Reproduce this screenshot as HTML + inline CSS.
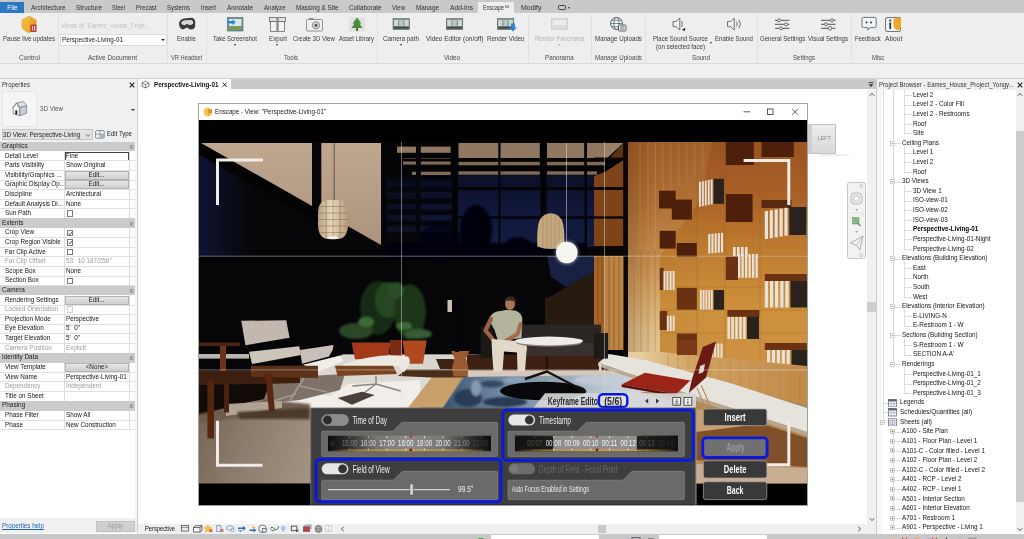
<!DOCTYPE html>
<html lang="en"><head><meta charset="utf-8"><title>Enscape - Perspective-Living-01</title>
<style>
html,body{margin:0;padding:0;background:#fff;}
body{width:1024px;height:539px;overflow:hidden;font-family:"Liberation Sans",sans-serif;}
#root{position:relative;width:1024px;height:539px;overflow:hidden;will-change:transform;filter:blur(0.35px);}
.b{position:absolute;display:block;}
.t{position:absolute;white-space:pre;display:block;}
svg{overflow:hidden;}
svg text{font-family:"Liberation Sans",sans-serif;}
</style></head>
<body><div id="root">
<div class="b" style="left:0.00px;top:0.00px;width:1024.00px;height:13.00px;background:#c9c9c9;"></div>
<div class="b" style="left:0.00px;top:2.00px;width:24.00px;height:11.00px;background:#2b79c2;"></div>
<span class="t" style="top:3.78px;font-size:6.8px;line-height:8.84px;color:#fff;left:6.52px;transform:scaleX(0.9450);transform-origin:50% 50%;">File</span>
<span class="t" style="top:3.78px;font-size:6.8px;line-height:8.84px;color:#2e2e2e;left:30.50px;transform:scaleX(0.9509);transform-origin:0 50%;">Architecture</span>
<span class="t" style="top:3.78px;font-size:6.8px;line-height:8.84px;color:#2e2e2e;left:75.50px;transform:scaleX(0.9424);transform-origin:0 50%;">Structure</span>
<span class="t" style="top:3.78px;font-size:6.8px;line-height:8.84px;color:#2e2e2e;left:112.00px;transform:scaleX(0.8387);transform-origin:0 50%;">Steel</span>
<span class="t" style="top:3.78px;font-size:6.8px;line-height:8.84px;color:#2e2e2e;left:136.00px;transform:scaleX(0.8892);transform-origin:0 50%;">Precast</span>
<span class="t" style="top:3.78px;font-size:6.8px;line-height:8.84px;color:#2e2e2e;left:167.00px;transform:scaleX(0.8822);transform-origin:0 50%;">Systems</span>
<span class="t" style="top:3.78px;font-size:6.8px;line-height:8.84px;color:#2e2e2e;left:201.00px;transform:scaleX(0.8820);transform-origin:0 50%;">Insert</span>
<span class="t" style="top:3.78px;font-size:6.8px;line-height:8.84px;color:#2e2e2e;left:227.00px;transform:scaleX(0.9550);transform-origin:0 50%;">Annotate</span>
<span class="t" style="top:3.78px;font-size:6.8px;line-height:8.84px;color:#2e2e2e;left:263.50px;transform:scaleX(0.8887);transform-origin:0 50%;">Analyze</span>
<span class="t" style="top:3.78px;font-size:6.8px;line-height:8.84px;color:#2e2e2e;left:296.00px;transform:scaleX(0.9371);transform-origin:0 50%;">Massing &amp; Site</span>
<span class="t" style="top:3.78px;font-size:6.8px;line-height:8.84px;color:#2e2e2e;left:349.00px;transform:scaleX(0.9345);transform-origin:0 50%;">Collaborate</span>
<span class="t" style="top:3.78px;font-size:6.8px;line-height:8.84px;color:#2e2e2e;left:392.00px;transform:scaleX(0.8894);transform-origin:0 50%;">View</span>
<span class="t" style="top:3.78px;font-size:6.8px;line-height:8.84px;color:#2e2e2e;left:416.00px;transform:scaleX(0.9359);transform-origin:0 50%;">Manage</span>
<span class="t" style="top:3.78px;font-size:6.8px;line-height:8.84px;color:#2e2e2e;left:449.50px;transform:scaleX(0.9814);transform-origin:0 50%;">Add-Ins</span>
<div class="b" style="left:478.00px;top:2.00px;width:36.00px;height:11.50px;background:#eeeeee;"></div>
<span class="t" style="top:3.78px;font-size:6.8px;line-height:8.84px;color:#2e2e2e;left:482.50px;transform:scaleX(0.7967);transform-origin:0 50%;">Enscape™</span>
<span class="t" style="top:3.78px;font-size:6.8px;line-height:8.84px;color:#2e2e2e;left:521.00px;transform:scaleX(1.0235);transform-origin:0 50%;">Modify</span>
<div class="b" style="left:558.00px;top:5.20px;width:7.50px;height:5.00px;border:0.8px solid #444;border-radius:1.2px;box-sizing:border-box;"></div>
<div class="b" style="left:567.5px;top:7px;border-left:1.6px solid transparent;border-right:1.6px solid transparent;border-top:2px solid #333;"></div>
<div class="b" style="left:0.00px;top:13.00px;width:1024.00px;height:50.30px;background:#eeeeee;"></div>
<div class="b" style="left:0.00px;top:63.20px;width:1024.00px;height:0.80px;background:#dadada;"></div>
<div class="b" style="left:0.00px;top:64.00px;width:1024.00px;height:14.20px;background:#f0f0f0;"></div>
<div class="b" style="left:57.50px;top:14.00px;width:0.80px;height:49.00px;background:#e0e0e0;"></div>
<div class="b" style="left:167.00px;top:14.00px;width:0.80px;height:49.00px;background:#e0e0e0;"></div>
<div class="b" style="left:205.50px;top:14.00px;width:0.80px;height:49.00px;background:#e0e0e0;"></div>
<div class="b" style="left:377.00px;top:14.00px;width:0.80px;height:49.00px;background:#e0e0e0;"></div>
<div class="b" style="left:527.50px;top:14.00px;width:0.80px;height:49.00px;background:#e0e0e0;"></div>
<div class="b" style="left:591.00px;top:14.00px;width:0.80px;height:49.00px;background:#e0e0e0;"></div>
<div class="b" style="left:645.00px;top:14.00px;width:0.80px;height:49.00px;background:#e0e0e0;"></div>
<div class="b" style="left:756.50px;top:14.00px;width:0.80px;height:49.00px;background:#e0e0e0;"></div>
<div class="b" style="left:851.00px;top:14.00px;width:0.80px;height:49.00px;background:#e0e0e0;"></div>
<span class="t" style="top:34.58px;font-size:6.8px;line-height:8.84px;color:#3a3a3a;left:3.00px;transform:scaleX(0.9049);transform-origin:0 50%;">Pause live updates</span>
<span class="t" style="top:34.58px;font-size:6.8px;line-height:8.84px;color:#3a3a3a;left:177.00px;transform:scaleX(0.8973);transform-origin:0 50%;">Enable</span>
<span class="t" style="top:34.58px;font-size:6.8px;line-height:8.84px;color:#3a3a3a;left:213.00px;transform:scaleX(0.8687);transform-origin:0 50%;">Take Screenshot</span>
<span class="t" style="top:34.58px;font-size:6.8px;line-height:8.84px;color:#3a3a3a;left:268.50px;transform:scaleX(0.9159);transform-origin:0 50%;">Export</span>
<span class="t" style="top:34.58px;font-size:6.8px;line-height:8.84px;color:#3a3a3a;left:293.00px;transform:scaleX(0.8790);transform-origin:0 50%;">Create 3D View</span>
<span class="t" style="top:34.58px;font-size:6.8px;line-height:8.84px;color:#3a3a3a;left:338.50px;transform:scaleX(0.8820);transform-origin:0 50%;">Asset Library</span>
<span class="t" style="top:34.58px;font-size:6.8px;line-height:8.84px;color:#3a3a3a;left:383.00px;transform:scaleX(0.9158);transform-origin:0 50%;">Camera path</span>
<span class="t" style="top:34.58px;font-size:6.8px;line-height:8.84px;color:#3a3a3a;left:426.00px;transform:scaleX(0.9546);transform-origin:0 50%;">Video Editor (on/off)</span>
<span class="t" style="top:34.58px;font-size:6.8px;line-height:8.84px;color:#3a3a3a;left:486.50px;transform:scaleX(0.9044);transform-origin:0 50%;">Render Video</span>
<span class="t" style="top:34.58px;font-size:6.8px;line-height:8.84px;color:#3a3a3a;left:595.00px;transform:scaleX(0.9142);transform-origin:0 50%;">Manage Uploads</span>
<span class="t" style="top:34.58px;font-size:6.8px;line-height:8.84px;color:#3a3a3a;left:652.50px;transform:scaleX(0.8871);transform-origin:0 50%;">Place Sound Source</span>
<span class="t" style="top:42.58px;font-size:6.8px;line-height:8.84px;color:#3a3a3a;left:656.00px;transform:scaleX(0.9065);transform-origin:0 50%;">(on selected face)</span>
<span class="t" style="top:34.58px;font-size:6.8px;line-height:8.84px;color:#3a3a3a;left:715.00px;transform:scaleX(0.8894);transform-origin:0 50%;">Enable Sound</span>
<span class="t" style="top:34.58px;font-size:6.8px;line-height:8.84px;color:#3a3a3a;left:759.50px;transform:scaleX(0.8933);transform-origin:0 50%;">General Settings</span>
<span class="t" style="top:34.58px;font-size:6.8px;line-height:8.84px;color:#3a3a3a;left:808.00px;transform:scaleX(0.8917);transform-origin:0 50%;">Visual Settings</span>
<span class="t" style="top:34.58px;font-size:6.8px;line-height:8.84px;color:#3a3a3a;left:854.75px;transform:scaleX(0.8623);transform-origin:0 50%;">Feedback</span>
<span class="t" style="top:34.58px;font-size:6.8px;line-height:8.84px;color:#3a3a3a;left:884.50px;transform:scaleX(0.9707);transform-origin:0 50%;">About</span>
<span class="t" style="top:34.58px;font-size:6.8px;line-height:8.84px;color:#b4b4b4;left:534.50px;transform:scaleX(0.8908);transform-origin:0 50%;">Render Panorama</span>
<span class="t" style="top:53.58px;font-size:6.8px;line-height:8.84px;color:#4a4a4a;left:19.00px;transform:scaleX(0.9580);transform-origin:0 50%;">Control</span>
<span class="t" style="top:53.58px;font-size:6.8px;line-height:8.84px;color:#4a4a4a;left:88.00px;transform:scaleX(0.9533);transform-origin:0 50%;">Active Document</span>
<span class="t" style="top:53.58px;font-size:6.8px;line-height:8.84px;color:#4a4a4a;left:171.00px;transform:scaleX(0.8455);transform-origin:0 50%;">VR Headset</span>
<span class="t" style="top:53.58px;font-size:6.8px;line-height:8.84px;color:#4a4a4a;left:284.00px;transform:scaleX(0.8819);transform-origin:0 50%;">Tools</span>
<span class="t" style="top:53.58px;font-size:6.8px;line-height:8.84px;color:#4a4a4a;left:444.00px;transform:scaleX(0.9265);transform-origin:0 50%;">Video</span>
<span class="t" style="top:53.58px;font-size:6.8px;line-height:8.84px;color:#4a4a4a;left:545.00px;transform:scaleX(0.9163);transform-origin:0 50%;">Panorama</span>
<span class="t" style="top:53.58px;font-size:6.8px;line-height:8.84px;color:#4a4a4a;left:595.00px;transform:scaleX(0.9142);transform-origin:0 50%;">Manage Uploads</span>
<span class="t" style="top:53.58px;font-size:6.8px;line-height:8.84px;color:#4a4a4a;left:692.00px;transform:scaleX(0.9154);transform-origin:0 50%;">Sound</span>
<span class="t" style="top:53.58px;font-size:6.8px;line-height:8.84px;color:#4a4a4a;left:793.00px;transform:scaleX(0.8954);transform-origin:0 50%;">Settings</span>
<span class="t" style="top:53.58px;font-size:6.8px;line-height:8.84px;color:#4a4a4a;left:871.75px;transform:scaleX(0.8765);transform-origin:0 50%;">Misc</span>
<span class="t" style="top:21.58px;font-size:6.8px;line-height:8.84px;color:#c2c2c2;left:61.00px;transform:scaleX(0.8917);transform-origin:0 50%;">Views of "Eames_House_Proje...</span>
<div class="b" style="left:60.00px;top:34.00px;width:106.50px;height:11.50px;background:#ffffff;border:0.6px solid #dcdcdc;box-sizing:border-box;"></div>
<span class="t" style="top:36.28px;font-size:6.8px;line-height:8.84px;color:#222;left:62.00px;transform:scaleX(0.9329);transform-origin:0 50%;">Perspective-Living-01</span>
<div class="b" style="left:161px;top:39px;border-left:2px solid transparent;border-right:2px solid transparent;border-top:2.2px solid #222;"></div>
<div class="b" style="left:233.5px;top:44.2px;border-left:1.8px solid transparent;border-right:1.8px solid transparent;border-top:2.2px solid #333;"></div>
<div class="b" style="left:276.0px;top:44.2px;border-left:1.8px solid transparent;border-right:1.8px solid transparent;border-top:2.2px solid #333;"></div>
<div class="b" style="left:399.5px;top:44.2px;border-left:1.8px solid transparent;border-right:1.8px solid transparent;border-top:2.2px solid #333;"></div>
<div class="b" style="left:557.5px;top:44.2px;border-left:1.8px solid transparent;border-right:1.8px solid transparent;border-top:2.2px solid #aaa;"></div>
<div class="b" style="left:709.5px;top:42.2px;border-left:1.8px solid transparent;border-right:1.8px solid transparent;border-top:2.2px solid #333;"></div>
<svg class="b" style="left:0;top:0" width="1024" height="70" viewBox="0 0 1024 70">
<defs>
<linearGradient id="gsh" x1="0" y1="0" x2="1" y2="1"><stop offset="0" stop-color="#f7c64a"/><stop offset="1" stop-color="#d98a12"/></linearGradient>
<linearGradient id="gfilm" x1="0" y1="0" x2="0" y2="1"><stop offset="0" stop-color="#8c9a9a"/><stop offset="1" stop-color="#6a7674"/></linearGradient>
<g id="film"><rect x="0" y="0" width="16.5" height="11" fill="url(#gfilm)" stroke="#4a5250" stroke-width="0.5"/>
<rect x="1" y="1.5" width="4.2" height="6" fill="#cfd8d2"/><rect x="6.2" y="1.5" width="4.2" height="6" fill="#b9c9c0"/><rect x="11.4" y="1.5" width="4.2" height="6" fill="#cfd8d2"/>
<rect x="1" y="8.5" width="14.5" height="1.5" fill="#3d4543"/></g>
</defs>
<!-- pause live updates shield -->
<path d="M22 20 L29 16.3 L36 20 L36 26 Q36 30 29 32.5 Q22 30 22 26 Z" fill="url(#gsh)" stroke="#c98a1a" stroke-width="0.6"/>
<path d="M22 20 L29 16.3 L29 32.5 Q22 30 22 26 Z" fill="#f2b63a" opacity="0.7"/>
<rect x="30.5" y="24.5" width="6" height="7.5" rx="0.8" fill="#c03a3a"/>
<rect x="32" y="26" width="1.1" height="4.5" fill="#f4c8c8"/><rect x="34" y="26" width="1.1" height="4.5" fill="#f4c8c8"/>
<!-- VR headset -->
<path d="M179 24 Q179 19.5 184 18.5 L192 17.8 Q195 18.5 195.3 22 L195 27 Q194 29.8 190 29.5 L187 27.5 L183 29.5 Q179.5 29 179 24 Z" fill="#3a3a3a"/>
<path d="M181 23 Q182 20.5 185 20.3 L191.5 20 Q193.5 20.8 193.3 23.5 Q192 25 189 25 L187 23.8 L184.5 25.2 Q181.5 25 181 23 Z" fill="#d8d8d8"/>
<!-- take screenshot -->
<rect x="227.5" y="17.5" width="15.5" height="13.5" fill="#6f8f96" stroke="#56666a" stroke-width="0.6"/>
<rect x="229" y="19" width="12.5" height="7" fill="#d9e6ea"/>
<rect x="229" y="26" width="12.5" height="4" fill="#7a9a58"/>
<path d="M227 21 h5.5 v-1.8 l3.3 3 l-3.3 3 v-1.8 h-5.5 z" fill="#2f86d6"/>
<!-- export -->
<rect x="269.5" y="17.5" width="16" height="4" fill="#e4e4e4" stroke="#555" stroke-width="0.7"/>
<rect x="270.5" y="21.5" width="14" height="10" fill="#f4f4f4" stroke="#555" stroke-width="0.7"/>
<rect x="276.3" y="17.5" width="2.4" height="14" fill="#8a8f90"/>
<!-- create 3d view: camera -->
<rect x="306.5" y="19.5" width="16" height="11.5" rx="1.2" fill="#f0f0f0" stroke="#6a6a6a" stroke-width="0.7"/>
<rect x="309" y="18" width="4.5" height="2" fill="#8a8a8a"/>
<circle cx="316" cy="25.3" r="3.6" fill="#d8d8d8" stroke="#666" stroke-width="0.7"/><circle cx="316" cy="25.3" r="1.5" fill="#555"/>
<!-- asset library -->
<rect x="349" y="17" width="16.5" height="14.5" fill="#dfe3e0"/>
<path d="M357 17.5 l4.5 6 h-2 l3 4.5 h-11 l3 -4.5 h-2 z" fill="#4d8a3a"/>
<rect x="356.2" y="28" width="1.8" height="3" fill="#6b4a2a"/>
<!-- camera path / video editor / render video : film strips -->

<use href="#film" x="393" y="18.5"/>
<use href="#film" x="446.3" y="18.5"/>
<use href="#film" x="497.3" y="18.5"/>
<path d="M509 24 h4 v4 h2 l-4 4 l-4 -4 h2 z" fill="#2f86d6" transform="translate(2,-0.5)"/>
<!-- render panorama (disabled) -->
<rect x="551.5" y="18.5" width="16" height="11" fill="#dcdcdc" stroke="#c4c4c4" stroke-width="0.6"/>
<rect x="553" y="20" width="13" height="5" fill="#ececec"/>
<!-- manage uploads: globe -->
<circle cx="616.5" cy="23.5" r="6" fill="#f4f6f8" stroke="#4a5a66" stroke-width="0.9"/>
<ellipse cx="616.5" cy="23.5" rx="2.6" ry="6" fill="none" stroke="#4a5a66" stroke-width="0.7"/>
<path d="M610.5 23.5 h12 M611.5 20.3 h10 M611.5 26.7 h10" stroke="#4a5a66" stroke-width="0.7" fill="none"/>
<rect x="618.5" y="25" width="7.5" height="6" rx="0.8" fill="#e8ecf0" stroke="#3d4a55" stroke-width="0.8"/>
<path d="M620 27 h4.5 M620 29 h4.5" stroke="#3d4a55" stroke-width="0.7"/>
<!-- place sound source -->
<path d="M673 21.5 h3 l3.8 -3.3 v11.8 l-3.8 -3.3 h-3 z" fill="#f0f0f0" stroke="#555" stroke-width="0.8"/>
<path d="M681.5 21 q1.8 3 0 6" stroke="#555" stroke-width="0.8" fill="none"/>
<path d="M682 29.5 l3.5 -1.8 l-1 3.5 z" fill="#222"/>
<!-- enable sound -->
<path d="M727.5 21.5 h3 l3.8 -3.3 v11.8 l-3.8 -3.3 h-3 z" fill="#f0f0f0" stroke="#555" stroke-width="0.8"/>
<path d="M736.5 21.5 q1.6 2.5 0 5 M739 19.8 q2.6 4.2 0 8.4" stroke="#555" stroke-width="0.8" fill="none"/>
<!-- general settings -->
<g stroke="#4a5660" stroke-width="1" fill="none"><path d="M775 20.3 h14.5 M775 24.3 h14.5 M775 28.3 h14.5"/></g>
<g fill="#eef2f4" stroke="#4a5660" stroke-width="0.8"><circle cx="779" cy="20.3" r="1.5"/><circle cx="786" cy="24.3" r="1.5"/><circle cx="781" cy="28.3" r="1.5"/></g>
<!-- visual settings -->
<g stroke="#4a5660" stroke-width="1" fill="none"><path d="M821 20.3 h14.5 M821 24.3 h14.5 M821 28.3 h14.5"/></g>
<g fill="#eef2f4" stroke="#4a5660" stroke-width="0.8"><circle cx="832" cy="20.3" r="1.5"/><circle cx="826" cy="24.3" r="1.5"/><circle cx="830" cy="28.3" r="1.8"/></g>
<!-- feedback -->
<path d="M862 19 q0 -1.6 1.6 -1.6 h11 q1.6 0 1.6 1.6 v7 q0 1.6 -1.6 1.6 h-4.5 l-2.2 2.6 v-2.6 h-4.3 q-1.6 0 -1.6 -1.6 z" fill="#f2f4f6" stroke="#5a6a78" stroke-width="0.9"/>
<circle cx="866.5" cy="22.5" r="1" fill="#333"/><circle cx="871" cy="22.5" r="1" fill="#333"/>
<!-- about -->
<rect x="885.5" y="17.5" width="15" height="14" rx="1.5" fill="#f2f2f2" stroke="#5a6a78" stroke-width="0.9"/>
<path d="M893.5 19 l4 -1.8 l3.5 1.8 v8 q-1 2.5 -3.5 3.5 q-3 -1.5 -4 -4 z" fill="#f0a72a"/>
<rect x="889.3" y="22.5" width="1.8" height="6.5" fill="#2a3a5a"/><circle cx="890.2" cy="20.5" r="1.1" fill="#2a3a5a"/>
</svg>
<div class="b" style="left:0.00px;top:78.20px;width:138.00px;height:455.00px;background:#f0f0f0;"></div>
<div class="b" style="left:0.00px;top:78.20px;width:1024.00px;height:0.70px;background:#cfcfcf;"></div>
<div class="b" style="left:0.00px;top:79.00px;width:137.50px;height:10.50px;background:#f0f0f0;"></div>
<span class="t" style="top:81.24px;font-size:6.7px;line-height:8.71px;color:#333;left:2.00px;transform:scaleX(0.9169);transform-origin:0 50%;">Properties</span>
<svg class="b" style="left:128.5px;top:82px" width="6" height="6" viewBox="0 0 6 6"><path d="M0.7 0.7 L5.3 5.3 M5.3 0.7 L0.7 5.3" stroke="#222" stroke-width="1.1"/></svg>
<div class="b" style="left:0.00px;top:89.50px;width:137.50px;height:0.60px;background:#dcdcdc;"></div>
<div class="b" style="left:0.00px;top:90.00px;width:137.00px;height:38.00px;background:#f1f1f1;"></div>
<div class="b" style="left:2.00px;top:91.00px;width:35.00px;height:36.30px;background:#f5f5f5;border:0.6px solid #e4e4e4;box-sizing:border-box;"></div>
<svg class="b" style="left:11px;top:100px" width="18" height="18" viewBox="0 0 18 18">
<path d="M2.2 7.5 L5.5 3.2 L8.8 7.5 L8.8 15.8 L2.2 13.6 Z" fill="#f2f3f5" stroke="#6e747c" stroke-width="0.7" stroke-linejoin="round"/>
<path d="M8.8 7.5 L15.6 5.6 L15.6 13.2 L8.8 15.8 Z" fill="#c9ced6" stroke="#6e747c" stroke-width="0.7" stroke-linejoin="round"/>
<path d="M5.5 3.2 L12.2 1.6 L15.9 5.6 L8.8 7.5 Z" fill="#dde2ea" stroke="#6e747c" stroke-width="0.7" stroke-linejoin="round"/>
<path d="M1.4 8 L5.5 2.8 L9.2 7.8" fill="none" stroke="#6e747c" stroke-width="0.8"/>
<rect x="4.3" y="10.4" width="2" height="4" fill="#2a2a2a"/>
</svg>
<span class="t" style="top:105.14px;font-size:6.7px;line-height:8.71px;color:#555;left:40.00px;transform:scaleX(0.9264);transform-origin:0 50%;">3D View</span>
<div class="b" style="left:130.5px;top:108.5px;border-left:2.1px solid transparent;border-right:2.1px solid transparent;border-top:2.3px solid #333;"></div>
<div class="b" style="left:1.50px;top:128.60px;width:91.00px;height:11.80px;background:#e2e2e2;border:0.5px solid #c6c6c6;box-sizing:border-box;"></div>
<span class="t" style="top:131.15px;font-size:6.7px;line-height:8.71px;color:#222;left:3.00px;transform:scaleX(0.9280);transform-origin:0 50%;">3D View: Perspective-Living</span>
<svg class="b" style="left:84.5px;top:132.5px" width="6" height="5" viewBox="0 0 6 5"><path d="M1 1.2 L3 3.4 L5 1.2" stroke="#444" stroke-width="0.7" fill="none"/></svg>
<svg class="b" style="left:95px;top:129px" width="10" height="10" viewBox="0 0 10 10">
<rect x="0.6" y="1.6" width="8.6" height="7.6" rx="0.8" fill="#f4f6fa" stroke="#566" stroke-width="0.7"/>
<path d="M4.9 1.6 v7.6 M0.6 5.2 h8.6" stroke="#566" stroke-width="0.6"/><rect x="5.4" y="5.7" width="3.4" height="3" fill="#9ab0d8"/></svg>
<span class="t" style="top:129.95px;font-size:6.7px;line-height:8.71px;color:#222;left:107.00px;transform:scaleX(0.8989);transform-origin:0 50%;">Edit Type</span>
<div class="b" style="left:0.00px;top:141.60px;width:134.50px;height:288.21px;background:#ffffff;"></div>
<div class="b" style="left:0.00px;top:141.60px;width:134.50px;height:9.61px;background:#cbcbcb;"></div>
<span class="t" style="top:141.95px;font-size:6.7px;line-height:8.71px;color:#1a1a1a;left:2.00px;transform:scaleX(0.9600);transform-origin:0 50%;">Graphics</span>
<svg class="b" style="left:128.5px;top:143.90px" width="5" height="5.5" viewBox="0 0 5 5.5"><path d="M1.2 2.5 L2.5 1.2 L3.8 2.5 M1.2 4.6 L2.5 3.3 L3.8 4.6" stroke="#333" stroke-width="0.7" fill="none"/></svg>
<span class="t" style="top:151.56px;font-size:6.7px;line-height:8.71px;color:#141414;left:5.00px;transform:scaleX(0.9450);transform-origin:0 50%;">Detail Level</span>
<div class="b" style="left:65.00px;top:151.51px;width:64.00px;height:9.21px;background:#fff;border:0.9px solid #444;box-sizing:border-box;"></div>
<span class="t" style="top:151.56px;font-size:6.7px;line-height:8.71px;color:#141414;left:66.30px;transform:scaleX(0.9450);transform-origin:0 50%;">Fine</span>
<div class="b" style="left:0.00px;top:160.41px;width:134.50px;height:0.50px;background:#e0e0e0;"></div>
<span class="t" style="top:161.16px;font-size:6.7px;line-height:8.71px;color:#141414;left:5.00px;transform:scaleX(0.9450);transform-origin:0 50%;">Parts Visibility</span>
<span class="t" style="top:161.16px;font-size:6.7px;line-height:8.71px;color:#141414;left:66.30px;transform:scaleX(0.9450);transform-origin:0 50%;">Show Original</span>
<div class="b" style="left:0.00px;top:170.02px;width:134.50px;height:0.50px;background:#e0e0e0;"></div>
<span class="t" style="top:170.77px;font-size:6.7px;line-height:8.71px;color:#141414;left:5.00px;transform:scaleX(0.9450);transform-origin:0 50%;">Visibility/Graphics ...</span>
<div class="b" style="left:65.00px;top:170.82px;width:64.00px;height:8.81px;background:linear-gradient(#e6e6e6,#cfcfcf);border:0.5px solid #b4b4b4;box-sizing:border-box;"></div>
<span class="t" style="top:170.77px;font-size:6.7px;line-height:8.71px;color:#222;left:88.44px;transform:scaleX(0.9450);transform-origin:50% 50%;">Edit...</span>
<div class="b" style="left:0.00px;top:179.63px;width:134.50px;height:0.50px;background:#e0e0e0;"></div>
<span class="t" style="top:180.38px;font-size:6.7px;line-height:8.71px;color:#141414;left:5.00px;transform:scaleX(0.9450);transform-origin:0 50%;">Graphic Display Op...</span>
<div class="b" style="left:65.00px;top:180.43px;width:64.00px;height:8.81px;background:linear-gradient(#e6e6e6,#cfcfcf);border:0.5px solid #b4b4b4;box-sizing:border-box;"></div>
<span class="t" style="top:180.38px;font-size:6.7px;line-height:8.71px;color:#222;left:88.44px;transform:scaleX(0.9450);transform-origin:50% 50%;">Edit...</span>
<div class="b" style="left:0.00px;top:189.23px;width:134.50px;height:0.50px;background:#e0e0e0;"></div>
<span class="t" style="top:189.98px;font-size:6.7px;line-height:8.71px;color:#141414;left:5.00px;transform:scaleX(0.9450);transform-origin:0 50%;">Discipline</span>
<span class="t" style="top:189.98px;font-size:6.7px;line-height:8.71px;color:#141414;left:66.30px;transform:scaleX(0.9450);transform-origin:0 50%;">Architectural</span>
<div class="b" style="left:0.00px;top:198.84px;width:134.50px;height:0.50px;background:#e0e0e0;"></div>
<span class="t" style="top:199.59px;font-size:6.7px;line-height:8.71px;color:#141414;left:5.00px;transform:scaleX(0.9450);transform-origin:0 50%;">Default Analysis Di...</span>
<span class="t" style="top:199.59px;font-size:6.7px;line-height:8.71px;color:#141414;left:66.30px;transform:scaleX(0.9450);transform-origin:0 50%;">None</span>
<div class="b" style="left:0.00px;top:208.45px;width:134.50px;height:0.50px;background:#e0e0e0;"></div>
<span class="t" style="top:209.20px;font-size:6.7px;line-height:8.71px;color:#141414;left:5.00px;transform:scaleX(0.9450);transform-origin:0 50%;">Sun Path</span>
<div class="b" style="left:66.70px;top:210.35px;width:6.60px;height:6.60px;background:#fff;border:0.7px solid #7a7a7a;box-sizing:border-box;"></div>
<div class="b" style="left:0.00px;top:218.06px;width:134.50px;height:0.50px;background:#e0e0e0;"></div>
<div class="b" style="left:0.00px;top:218.46px;width:134.50px;height:9.61px;background:#cbcbcb;"></div>
<span class="t" style="top:218.80px;font-size:6.7px;line-height:8.71px;color:#1a1a1a;left:2.00px;transform:scaleX(0.9600);transform-origin:0 50%;">Extents</span>
<svg class="b" style="left:128.5px;top:220.76px" width="5" height="5.5" viewBox="0 0 5 5.5"><path d="M1.2 2.5 L2.5 1.2 L3.8 2.5 M1.2 4.6 L2.5 3.3 L3.8 4.6" stroke="#333" stroke-width="0.7" fill="none"/></svg>
<span class="t" style="top:228.41px;font-size:6.7px;line-height:8.71px;color:#141414;left:5.00px;transform:scaleX(0.9450);transform-origin:0 50%;">Crop View</span>
<div class="b" style="left:66.70px;top:229.56px;width:6.60px;height:6.60px;background:#fff;border:0.7px solid #7a7a7a;box-sizing:border-box;"></div>
<svg class="b" style="left:66.7px;top:229.56px" width="6.6" height="6.6" viewBox="0 0 6.6 6.6"><path d="M1.5 3.3 L2.9 4.8 L5.2 1.7" stroke="#333" stroke-width="0.8" fill="none"/></svg>
<div class="b" style="left:0.00px;top:237.27px;width:134.50px;height:0.50px;background:#e0e0e0;"></div>
<span class="t" style="top:238.02px;font-size:6.7px;line-height:8.71px;color:#141414;left:5.00px;transform:scaleX(0.9450);transform-origin:0 50%;">Crop Region Visible</span>
<div class="b" style="left:66.70px;top:239.17px;width:6.60px;height:6.60px;background:#fff;border:0.7px solid #7a7a7a;box-sizing:border-box;"></div>
<svg class="b" style="left:66.7px;top:239.17px" width="6.6" height="6.6" viewBox="0 0 6.6 6.6"><path d="M1.5 3.3 L2.9 4.8 L5.2 1.7" stroke="#333" stroke-width="0.8" fill="none"/></svg>
<div class="b" style="left:0.00px;top:246.88px;width:134.50px;height:0.50px;background:#e0e0e0;"></div>
<span class="t" style="top:247.63px;font-size:6.7px;line-height:8.71px;color:#141414;left:5.00px;transform:scaleX(0.9450);transform-origin:0 50%;">Far Clip Active</span>
<div class="b" style="left:66.70px;top:248.78px;width:6.60px;height:6.60px;background:#fff;border:0.7px solid #7a7a7a;box-sizing:border-box;"></div>
<div class="b" style="left:0.00px;top:256.48px;width:134.50px;height:0.50px;background:#e0e0e0;"></div>
<span class="t" style="top:257.23px;font-size:6.7px;line-height:8.71px;color:#9a9a9a;left:5.00px;transform:scaleX(0.9450);transform-origin:0 50%;">Far Clip Offset</span>
<span class="t" style="top:257.23px;font-size:6.7px;line-height:8.71px;color:#9a9a9a;left:66.30px;transform:scaleX(0.9450);transform-origin:0 50%;">53'  10 187/256"</span>
<div class="b" style="left:0.00px;top:266.09px;width:134.50px;height:0.50px;background:#e0e0e0;"></div>
<span class="t" style="top:266.84px;font-size:6.7px;line-height:8.71px;color:#141414;left:5.00px;transform:scaleX(0.9450);transform-origin:0 50%;">Scope Box</span>
<span class="t" style="top:266.84px;font-size:6.7px;line-height:8.71px;color:#141414;left:66.30px;transform:scaleX(0.9450);transform-origin:0 50%;">None</span>
<div class="b" style="left:0.00px;top:275.70px;width:134.50px;height:0.50px;background:#e0e0e0;"></div>
<span class="t" style="top:276.45px;font-size:6.7px;line-height:8.71px;color:#141414;left:5.00px;transform:scaleX(0.9450);transform-origin:0 50%;">Section Box</span>
<div class="b" style="left:66.70px;top:277.60px;width:6.60px;height:6.60px;background:#fff;border:0.7px solid #7a7a7a;box-sizing:border-box;"></div>
<div class="b" style="left:0.00px;top:285.30px;width:134.50px;height:0.50px;background:#e0e0e0;"></div>
<div class="b" style="left:0.00px;top:285.70px;width:134.50px;height:9.61px;background:#cbcbcb;"></div>
<span class="t" style="top:286.05px;font-size:6.7px;line-height:8.71px;color:#1a1a1a;left:2.00px;transform:scaleX(0.9600);transform-origin:0 50%;">Camera</span>
<svg class="b" style="left:128.5px;top:288.00px" width="5" height="5.5" viewBox="0 0 5 5.5"><path d="M1.2 2.5 L2.5 1.2 L3.8 2.5 M1.2 4.6 L2.5 3.3 L3.8 4.6" stroke="#333" stroke-width="0.7" fill="none"/></svg>
<span class="t" style="top:295.66px;font-size:6.7px;line-height:8.71px;color:#141414;left:5.00px;transform:scaleX(0.9450);transform-origin:0 50%;">Rendering Settings</span>
<div class="b" style="left:65.00px;top:295.71px;width:64.00px;height:8.81px;background:linear-gradient(#e6e6e6,#cfcfcf);border:0.5px solid #b4b4b4;box-sizing:border-box;"></div>
<span class="t" style="top:295.66px;font-size:6.7px;line-height:8.71px;color:#222;left:88.44px;transform:scaleX(0.9450);transform-origin:50% 50%;">Edit...</span>
<div class="b" style="left:0.00px;top:304.52px;width:134.50px;height:0.50px;background:#e0e0e0;"></div>
<span class="t" style="top:305.27px;font-size:6.7px;line-height:8.71px;color:#9a9a9a;left:5.00px;transform:scaleX(0.9450);transform-origin:0 50%;">Locked Orientation</span>
<div class="b" style="left:66.70px;top:306.42px;width:6.60px;height:6.60px;background:#fff;border:0.7px solid #d0d0d0;box-sizing:border-box;"></div>
<div class="b" style="left:0.00px;top:314.13px;width:134.50px;height:0.50px;background:#e0e0e0;"></div>
<span class="t" style="top:314.87px;font-size:6.7px;line-height:8.71px;color:#141414;left:5.00px;transform:scaleX(0.9450);transform-origin:0 50%;">Projection Mode</span>
<span class="t" style="top:314.87px;font-size:6.7px;line-height:8.71px;color:#141414;left:66.30px;transform:scaleX(0.9450);transform-origin:0 50%;">Perspective</span>
<div class="b" style="left:0.00px;top:323.73px;width:134.50px;height:0.50px;background:#e0e0e0;"></div>
<span class="t" style="top:324.48px;font-size:6.7px;line-height:8.71px;color:#141414;left:5.00px;transform:scaleX(0.9450);transform-origin:0 50%;">Eye Elevation</span>
<span class="t" style="top:324.48px;font-size:6.7px;line-height:8.71px;color:#141414;left:66.30px;transform:scaleX(0.9450);transform-origin:0 50%;">5'  0"</span>
<div class="b" style="left:0.00px;top:333.34px;width:134.50px;height:0.50px;background:#e0e0e0;"></div>
<span class="t" style="top:334.09px;font-size:6.7px;line-height:8.71px;color:#141414;left:5.00px;transform:scaleX(0.9450);transform-origin:0 50%;">Target Elevation</span>
<span class="t" style="top:334.09px;font-size:6.7px;line-height:8.71px;color:#141414;left:66.30px;transform:scaleX(0.9450);transform-origin:0 50%;">5'  0"</span>
<div class="b" style="left:0.00px;top:342.95px;width:134.50px;height:0.50px;background:#e0e0e0;"></div>
<span class="t" style="top:343.70px;font-size:6.7px;line-height:8.71px;color:#9a9a9a;left:5.00px;transform:scaleX(0.9450);transform-origin:0 50%;">Camera Position</span>
<span class="t" style="top:343.70px;font-size:6.7px;line-height:8.71px;color:#9a9a9a;left:66.30px;transform:scaleX(0.9450);transform-origin:0 50%;">Explicit</span>
<div class="b" style="left:0.00px;top:352.55px;width:134.50px;height:0.50px;background:#e0e0e0;"></div>
<div class="b" style="left:0.00px;top:352.95px;width:134.50px;height:9.61px;background:#cbcbcb;"></div>
<span class="t" style="top:353.30px;font-size:6.7px;line-height:8.71px;color:#1a1a1a;left:2.00px;transform:scaleX(0.9600);transform-origin:0 50%;">Identity Data</span>
<svg class="b" style="left:128.5px;top:355.25px" width="5" height="5.5" viewBox="0 0 5 5.5"><path d="M1.2 2.5 L2.5 1.2 L3.8 2.5 M1.2 4.6 L2.5 3.3 L3.8 4.6" stroke="#333" stroke-width="0.7" fill="none"/></svg>
<span class="t" style="top:362.91px;font-size:6.7px;line-height:8.71px;color:#141414;left:5.00px;transform:scaleX(0.9450);transform-origin:0 50%;">View Template</span>
<div class="b" style="left:65.00px;top:362.96px;width:64.00px;height:8.81px;background:linear-gradient(#e6e6e6,#cfcfcf);border:0.5px solid #b4b4b4;box-sizing:border-box;"></div>
<span class="t" style="top:362.91px;font-size:6.7px;line-height:8.71px;color:#222;left:85.08px;transform:scaleX(0.9450);transform-origin:50% 50%;">&lt;None&gt;</span>
<div class="b" style="left:0.00px;top:371.77px;width:134.50px;height:0.50px;background:#e0e0e0;"></div>
<span class="t" style="top:372.52px;font-size:6.7px;line-height:8.71px;color:#141414;left:5.00px;transform:scaleX(0.9450);transform-origin:0 50%;">View Name</span>
<span class="t" style="top:372.52px;font-size:6.7px;line-height:8.71px;color:#141414;left:66.30px;transform:scaleX(0.9450);transform-origin:0 50%;">Perspective-Living-01</span>
<div class="b" style="left:0.00px;top:381.37px;width:134.50px;height:0.50px;background:#e0e0e0;"></div>
<span class="t" style="top:382.12px;font-size:6.7px;line-height:8.71px;color:#9a9a9a;left:5.00px;transform:scaleX(0.9450);transform-origin:0 50%;">Dependency</span>
<span class="t" style="top:382.12px;font-size:6.7px;line-height:8.71px;color:#9a9a9a;left:66.30px;transform:scaleX(0.9450);transform-origin:0 50%;">Independent</span>
<div class="b" style="left:0.00px;top:390.98px;width:134.50px;height:0.50px;background:#e0e0e0;"></div>
<span class="t" style="top:391.73px;font-size:6.7px;line-height:8.71px;color:#141414;left:5.00px;transform:scaleX(0.9450);transform-origin:0 50%;">Title on Sheet</span>
<div class="b" style="left:0.00px;top:400.59px;width:134.50px;height:0.50px;background:#e0e0e0;"></div>
<div class="b" style="left:0.00px;top:400.99px;width:134.50px;height:9.61px;background:#cbcbcb;"></div>
<span class="t" style="top:401.34px;font-size:6.7px;line-height:8.71px;color:#1a1a1a;left:2.00px;transform:scaleX(0.9600);transform-origin:0 50%;">Phasing</span>
<svg class="b" style="left:128.5px;top:403.29px" width="5" height="5.5" viewBox="0 0 5 5.5"><path d="M1.2 2.5 L2.5 1.2 L3.8 2.5 M1.2 4.6 L2.5 3.3 L3.8 4.6" stroke="#333" stroke-width="0.7" fill="none"/></svg>
<span class="t" style="top:410.94px;font-size:6.7px;line-height:8.71px;color:#141414;left:5.00px;transform:scaleX(0.9450);transform-origin:0 50%;">Phase Filter</span>
<span class="t" style="top:410.94px;font-size:6.7px;line-height:8.71px;color:#141414;left:66.30px;transform:scaleX(0.9450);transform-origin:0 50%;">Show All</span>
<div class="b" style="left:0.00px;top:419.80px;width:134.50px;height:0.50px;background:#e0e0e0;"></div>
<span class="t" style="top:420.55px;font-size:6.7px;line-height:8.71px;color:#141414;left:5.00px;transform:scaleX(0.9450);transform-origin:0 50%;">Phase</span>
<span class="t" style="top:420.55px;font-size:6.7px;line-height:8.71px;color:#141414;left:66.30px;transform:scaleX(0.9450);transform-origin:0 50%;">New Construction</span>
<div class="b" style="left:0.00px;top:429.41px;width:134.50px;height:0.50px;background:#e0e0e0;"></div>
<div class="b" style="left:64.40px;top:151.21px;width:0.50px;height:9.61px;background:#dcdcdc;"></div>
<div class="b" style="left:129.20px;top:151.21px;width:0.50px;height:9.61px;background:#dcdcdc;"></div>
<div class="b" style="left:64.40px;top:160.81px;width:0.50px;height:9.61px;background:#dcdcdc;"></div>
<div class="b" style="left:129.20px;top:160.81px;width:0.50px;height:9.61px;background:#dcdcdc;"></div>
<div class="b" style="left:64.40px;top:170.42px;width:0.50px;height:9.61px;background:#dcdcdc;"></div>
<div class="b" style="left:129.20px;top:170.42px;width:0.50px;height:9.61px;background:#dcdcdc;"></div>
<div class="b" style="left:64.40px;top:180.03px;width:0.50px;height:9.61px;background:#dcdcdc;"></div>
<div class="b" style="left:129.20px;top:180.03px;width:0.50px;height:9.61px;background:#dcdcdc;"></div>
<div class="b" style="left:64.40px;top:189.63px;width:0.50px;height:9.61px;background:#dcdcdc;"></div>
<div class="b" style="left:129.20px;top:189.63px;width:0.50px;height:9.61px;background:#dcdcdc;"></div>
<div class="b" style="left:64.40px;top:199.24px;width:0.50px;height:9.61px;background:#dcdcdc;"></div>
<div class="b" style="left:129.20px;top:199.24px;width:0.50px;height:9.61px;background:#dcdcdc;"></div>
<div class="b" style="left:64.40px;top:208.85px;width:0.50px;height:9.61px;background:#dcdcdc;"></div>
<div class="b" style="left:129.20px;top:208.85px;width:0.50px;height:9.61px;background:#dcdcdc;"></div>
<div class="b" style="left:64.40px;top:228.06px;width:0.50px;height:9.61px;background:#dcdcdc;"></div>
<div class="b" style="left:129.20px;top:228.06px;width:0.50px;height:9.61px;background:#dcdcdc;"></div>
<div class="b" style="left:64.40px;top:237.67px;width:0.50px;height:9.61px;background:#dcdcdc;"></div>
<div class="b" style="left:129.20px;top:237.67px;width:0.50px;height:9.61px;background:#dcdcdc;"></div>
<div class="b" style="left:64.40px;top:247.28px;width:0.50px;height:9.61px;background:#dcdcdc;"></div>
<div class="b" style="left:129.20px;top:247.28px;width:0.50px;height:9.61px;background:#dcdcdc;"></div>
<div class="b" style="left:64.40px;top:256.88px;width:0.50px;height:9.61px;background:#dcdcdc;"></div>
<div class="b" style="left:129.20px;top:256.88px;width:0.50px;height:9.61px;background:#dcdcdc;"></div>
<div class="b" style="left:64.40px;top:266.49px;width:0.50px;height:9.61px;background:#dcdcdc;"></div>
<div class="b" style="left:129.20px;top:266.49px;width:0.50px;height:9.61px;background:#dcdcdc;"></div>
<div class="b" style="left:64.40px;top:276.10px;width:0.50px;height:9.61px;background:#dcdcdc;"></div>
<div class="b" style="left:129.20px;top:276.10px;width:0.50px;height:9.61px;background:#dcdcdc;"></div>
<div class="b" style="left:64.40px;top:295.31px;width:0.50px;height:9.61px;background:#dcdcdc;"></div>
<div class="b" style="left:129.20px;top:295.31px;width:0.50px;height:9.61px;background:#dcdcdc;"></div>
<div class="b" style="left:64.40px;top:304.92px;width:0.50px;height:9.61px;background:#dcdcdc;"></div>
<div class="b" style="left:129.20px;top:304.92px;width:0.50px;height:9.61px;background:#dcdcdc;"></div>
<div class="b" style="left:64.40px;top:314.53px;width:0.50px;height:9.61px;background:#dcdcdc;"></div>
<div class="b" style="left:129.20px;top:314.53px;width:0.50px;height:9.61px;background:#dcdcdc;"></div>
<div class="b" style="left:64.40px;top:324.13px;width:0.50px;height:9.61px;background:#dcdcdc;"></div>
<div class="b" style="left:129.20px;top:324.13px;width:0.50px;height:9.61px;background:#dcdcdc;"></div>
<div class="b" style="left:64.40px;top:333.74px;width:0.50px;height:9.61px;background:#dcdcdc;"></div>
<div class="b" style="left:129.20px;top:333.74px;width:0.50px;height:9.61px;background:#dcdcdc;"></div>
<div class="b" style="left:64.40px;top:343.35px;width:0.50px;height:9.61px;background:#dcdcdc;"></div>
<div class="b" style="left:129.20px;top:343.35px;width:0.50px;height:9.61px;background:#dcdcdc;"></div>
<div class="b" style="left:64.40px;top:362.56px;width:0.50px;height:9.61px;background:#dcdcdc;"></div>
<div class="b" style="left:129.20px;top:362.56px;width:0.50px;height:9.61px;background:#dcdcdc;"></div>
<div class="b" style="left:64.40px;top:372.17px;width:0.50px;height:9.61px;background:#dcdcdc;"></div>
<div class="b" style="left:129.20px;top:372.17px;width:0.50px;height:9.61px;background:#dcdcdc;"></div>
<div class="b" style="left:64.40px;top:381.77px;width:0.50px;height:9.61px;background:#dcdcdc;"></div>
<div class="b" style="left:129.20px;top:381.77px;width:0.50px;height:9.61px;background:#dcdcdc;"></div>
<div class="b" style="left:64.40px;top:391.38px;width:0.50px;height:9.61px;background:#dcdcdc;"></div>
<div class="b" style="left:129.20px;top:391.38px;width:0.50px;height:9.61px;background:#dcdcdc;"></div>
<div class="b" style="left:64.40px;top:410.60px;width:0.50px;height:9.61px;background:#dcdcdc;"></div>
<div class="b" style="left:129.20px;top:410.60px;width:0.50px;height:9.61px;background:#dcdcdc;"></div>
<div class="b" style="left:64.40px;top:420.20px;width:0.50px;height:9.61px;background:#dcdcdc;"></div>
<div class="b" style="left:129.20px;top:420.20px;width:0.50px;height:9.61px;background:#dcdcdc;"></div>
<div class="b" style="left:0.00px;top:429.81px;width:137.00px;height:88.19px;background:#ffffff;"></div>
<div class="b" style="left:134.50px;top:141.60px;width:0.50px;height:376.40px;background:#e4e4e4;"></div>
<div class="b" style="left:135.00px;top:141.60px;width:2.30px;height:376.40px;background:#f4f4f4;"></div>
<div class="b" style="left:137.30px;top:79.00px;width:0.80px;height:454.00px;background:#cdcdcd;"></div>
<div class="b" style="left:0.00px;top:518.00px;width:137.30px;height:15.00px;background:#f0f0f0;"></div>
<span class="t" style="top:521.94px;font-size:6.7px;line-height:8.71px;color:#1c62b9;left:2.00px;transform:scaleX(0.9320);transform-origin:0 50%;text-decoration:underline;">Properties help</span>
<div class="b" style="left:96.00px;top:521.00px;width:39.00px;height:11.00px;background:#cfcfcf;border:0.5px solid #c2c2c2;box-sizing:border-box;"></div>
<span class="t" style="top:522.25px;font-size:6.7px;line-height:8.71px;color:#9c9c9c;left:107.12px;transform:scaleX(0.9450);transform-origin:50% 50%;">Apply</span>
<div class="b" style="left:138.00px;top:78.90px;width:739.00px;height:454.50px;background:#ffffff;"></div>
<div class="b" style="left:138.00px;top:78.90px;width:739.00px;height:10.60px;background:#c9c9c9;"></div>
<div class="b" style="left:138.00px;top:78.90px;width:92.50px;height:10.60px;background:#ffffff;"></div>
<svg class="b" style="left:141px;top:80.3px" width="9" height="8.5" viewBox="0 0 9 8.5"><path d="M1 3 L4.5 1 L8 3 L8 6.2 L4.5 8 L1 6.2 Z" fill="#eceff2" stroke="#555" stroke-width="0.7"/><path d="M1 3 L4.5 4.6 L8 3 M4.5 4.6 V8" stroke="#555" stroke-width="0.6" fill="none"/></svg>
<span class="t" style="top:80.55px;font-size:6.7px;line-height:8.71px;color:#111;font-weight:bold;left:153.50px;transform:scaleX(0.9312);transform-origin:0 50%;">Perspective-Living-01</span>
<svg class="b" style="left:222.3px;top:82.3px" width="5.4" height="5.4" viewBox="0 0 6 6"><path d="M0.8 0.8 L5.2 5.2 M5.2 0.8 L0.8 5.2" stroke="#222" stroke-width="1.1"/></svg>
<div class="b" style="left:866.50px;top:78.90px;width:10.00px;height:10.60px;background:#c9c9c9;"></div>
<svg class="b" style="left:868px;top:81.5px" width="6" height="6" viewBox="0 0 6 6"><path d="M0.6 0.6 h4.8" stroke="#333" stroke-width="0.9"/><path d="M0.8 2.2 h4.4 l-2.2 2.8 z" fill="#333"/></svg>
<div class="b" style="left:866.50px;top:89.50px;width:10.00px;height:435.00px;background:#f0f0f0;"></div>
<div class="b" style="left:866.50px;top:302.00px;width:9.70px;height:10.00px;background:#cdcdcd;"></div>
<svg class="b" style="left:868.5px;top:92px" width="6" height="5" viewBox="0 0 6 5"><path d="M0.8 3.8 L3 1.4 L5.2 3.8" stroke="#444" stroke-width="0.9" fill="none"/></svg>
<svg class="b" style="left:868.5px;top:517px" width="6" height="5" viewBox="0 0 6 5"><path d="M0.8 1.2 L3 3.6 L5.2 1.2" stroke="#444" stroke-width="0.9" fill="none"/></svg>
<div class="b" style="left:138.00px;top:523.60px;width:739.00px;height:10.00px;background:#f0f0f0;"></div>
<span class="t" style="top:524.64px;font-size:6.7px;line-height:8.71px;color:#111;left:144.50px;transform:scaleX(0.8570);transform-origin:0 50%;">Perspective</span>
<div class="b" style="left:597.50px;top:524.60px;width:8.40px;height:8.60px;background:#c8c8c8;"></div>
<svg class="b" style="left:339.5px;top:525.7px" width="5" height="6" viewBox="0 0 5 6"><path d="M3.8 0.8 L1.4 3 L3.8 5.2" stroke="#444" stroke-width="0.9" fill="none"/></svg>
<svg class="b" style="left:857px;top:525.7px" width="5" height="6" viewBox="0 0 5 6"><path d="M1.2 0.8 L3.6 3 L1.2 5.2" stroke="#444" stroke-width="0.9" fill="none"/></svg>
<div class="b" style="left:866.50px;top:523.60px;width:10.00px;height:10.00px;background:#f0f0f0;"></div>
<svg class="b" style="left:178px;top:524.1px" width="162" height="10" viewBox="178 523.5 162 10">
<rect x="181.3" y="525" width="7.2" height="5.6" fill="#e8e8e8" stroke="#444" stroke-width="0.7"/><path d="M181.3 527 h7.2" stroke="#444" stroke-width="0.5"/>
<path d="M193.5 527 h6.5 v4.6 h-6.5 z M193.5 527 l2 -1.8 h6.5 v4.6 l-2 1.8 M200 527 l2 -1.8" fill="#f4f4f4" stroke="#333" stroke-width="0.7"/>
<path d="M208 524.5 l1.2 2.4 l2.6 0.3 l-1.9 1.8 l0.5 2.6 l-2.4 -1.3 l-2.4 1.3 l0.5 -2.6 l-1.9 -1.8 l2.6 -0.3 z" fill="#f6c832" stroke="#c89010" stroke-width="0.4"/>
<path d="M209.5 528.5 l3 3 M212.5 528.5 l-3 3" stroke="#d02020" stroke-width="1"/>
<path d="M216.5 525 h4.5 v6 h-4.5 z" fill="#dfe8f4" stroke="#5a7aa8" stroke-width="0.6"/>
<path d="M220.5 528.5 l3 3 M223.5 528.5 l-3 3" stroke="#d02020" stroke-width="1"/>
<ellipse cx="230" cy="527.5" rx="3.8" ry="2.2" fill="#e4ecf4" stroke="#5a7a98" stroke-width="0.6"/><circle cx="232.5" cy="529.5" r="1.6" fill="#f4f4f4" stroke="#4a78b8" stroke-width="0.6"/>
<path d="M238 527 h5 v-1.5 l3 2.3 l-3 2.3 v-1.5 h-5 z" fill="#2a6ac8"/><path d="M246 530.5 h-5 v1.2 l-3 -2 z" fill="#2a6ac8"/>
<path d="M249.5 529 h4 v-1.5 l2.8 2.3 l-2.8 2.3 v-1.5 h-4 z" fill="#2a6ac8"/><path d="M253 524.8 l1 1.6 h2 l-1.4 1.4 l-3 0 z" fill="#f0c030"/>
<circle cx="262.5" cy="528.3" r="3.8" fill="#eef2f4" stroke="#4a5a66" stroke-width="0.8"/><rect x="262.5" y="528" width="3.6" height="3.6" fill="#e8ecf0" stroke="#3a4650" stroke-width="0.6"/>
<path d="M270 528 q2 -3 4 0 q2 3 4 0 q1 -2 0 -2.5 M271 529 q2 3 4 0" fill="none" stroke="#3a4650" stroke-width="0.8"/>
<circle cx="283.3" cy="527.5" r="1.6" fill="#cfe2fa" stroke="#3a78d0" stroke-width="0.6"/><path d="M283.3 529.2 v2" stroke="#3a78d0" stroke-width="0.7"/>
<rect x="291.3" y="525.6" width="5.6" height="4.6" fill="#f4f4f4" stroke="#333" stroke-width="0.8"/><path d="M296 529 l2.5 2.5 M298.5 529 l-2.5 2.5" stroke="#333" stroke-width="0.8"/>
<rect x="303.3" y="526.3" width="6.5" height="4.6" fill="#c84040" stroke="#4a4a58" stroke-width="0.6"/><path d="M304 526 l2 -1.4 h5 v4" fill="none" stroke="#4a4a58" stroke-width="0.6"/>
<circle cx="318.5" cy="528.4" r="3.5" fill="#8a8f8c" stroke="#555" stroke-width="0.5"/><path d="M316 527 h5 M316 529.6 h5" stroke="#ddd" stroke-width="0.5"/>
<path d="M325.5 525 h6 v6 h-6 z M328.5 525 v6" fill="none" stroke="#c4c4c4" stroke-width="0.7"/>
</svg>
<div class="b" style="left:808.00px;top:123.60px;width:28.20px;height:30.00px;background:linear-gradient(#ededed,#d8d8d8);border:0.6px solid #c2c2c2;box-sizing:border-box;"></div>
<div class="b" style="left:808.00px;top:123.60px;width:3.50px;height:30.00px;background:#d0d0d0;"></div>
<span class="t" style="top:134.73px;font-size:5.8px;line-height:7.54px;color:#8a8a8a;left:816.91px;transform:scaleX(0.9450);transform-origin:50% 50%;">LEFT</span>
<div class="b" style="left:818.00px;top:153.50px;width:32.00px;height:2.50px;background:#ececec;border-radius:50%;"></div>
<div class="b" style="left:846.60px;top:182.00px;width:19.00px;height:77.00px;background:#f2f2f2;border:0.7px solid #c6c6c6;border-radius:2.5px;box-sizing:border-box;"></div>
<svg class="b" style="left:846.6px;top:182px" width="19" height="77" viewBox="0 0 19 77">
<circle cx="14.2" cy="3.7" r="1.5" fill="#e4e4e4" stroke="#aaa" stroke-width="0.5"/><circle cx="14.2" cy="73.3" r="1.5" fill="#e4e4e4" stroke="#aaa" stroke-width="0.5"/>
<rect x="4" y="11" width="11" height="11" rx="3.5" fill="#ebebeb" stroke="#a8a8a8" stroke-width="0.8"/><rect x="6.8" y="13.8" width="5.4" height="5.4" rx="1.5" fill="#f6f6f6" stroke="#b0b0b0" stroke-width="0.7"/>
<path d="M8.3 27.3 h2.4 l-1.2 1.5 z" fill="#777"/><path d="M2 31 h15" stroke="#d4d4d4" stroke-width="0.5"/>
<rect x="5.5" y="35.5" width="6.5" height="6.5" fill="#8ab88a" stroke="#5a9a5a" stroke-width="0.5"/><path d="M10.5 41 l3 3" stroke="#6a8a6a" stroke-width="1.1"/>
<path d="M8.3 49.3 h2.4 l-1.2 1.5 z" fill="#777"/>
<path d="M3.5 61 L16 54 L13 68 L9.5 63.5 Z" fill="#f0f0f0" stroke="#a0a0a0" stroke-width="0.8"/><path d="M9.5 63.5 L16 54" stroke="#a0a0a0" stroke-width="0.6"/>
</svg>
<div class="b" style="left:198.00px;top:103.00px;width:610.00px;height:403.00px;background:#ffffff;border:1px solid #a2a2a2;box-sizing:border-box;"></div>
<svg class="b" style="left:202.5px;top:106.6px" width="9.5" height="10" viewBox="0 0 9.5 10"><path d="M0.8 2.6 L4.8 0.6 L8.8 2.6 L8.8 6 Q8.4 8.4 4.8 9.6 Q1.2 8.4 0.8 6 Z" fill="#eeb030"/><path d="M0.8 2.6 L4.8 0.6 L4.8 9.6 Q1.2 8.4 0.8 6 Z" fill="#f6c850"/><path d="M4.8 3 L8.8 2.6 L8.8 6 L4.8 5.6 Z" fill="#d89018"/></svg>
<span class="t" style="top:107.64px;font-size:6.7px;line-height:8.71px;color:#222;left:214.60px;transform:scaleX(0.9335);transform-origin:0 50%;">Enscape - View: "Perspective-Living-01"</span>
<svg class="b" style="left:735px;top:106px" width="70" height="12" viewBox="735 106 70 12"><path d="M743.5 111.8 h6.6" stroke="#333" stroke-width="0.8"/><rect x="767.6" y="109" width="5.4" height="5.4" fill="none" stroke="#333" stroke-width="0.8"/><path d="M792.2 109 l5.6 5.6 M797.8 109 l-5.6 5.6" stroke="#333" stroke-width="0.8"/></svg>
<div class="b" style="left:876.70px;top:79.00px;width:148.00px;height:454.00px;background:#ffffff;"></div>
<div class="b" style="left:876.70px;top:79.00px;width:148.00px;height:10.50px;background:#f0f0f0;"></div>
<span class="t" style="top:81.24px;font-size:6.7px;line-height:8.71px;color:#333;left:879.00px;transform:scaleX(0.9063);transform-origin:0 50%;">Project Browser - Eames_House_Project_Yongy...</span>
<svg class="b" style="left:1016.5px;top:82px" width="6" height="6" viewBox="0 0 6 6"><path d="M0.7 0.7 L5.3 5.3 M5.3 0.7 L0.7 5.3" stroke="#222" stroke-width="1.1"/></svg>
<div class="b" style="left:876.20px;top:79.00px;width:0.70px;height:455.00px;background:#cdcdcd;"></div>
<div class="b" style="left:877.00px;top:89.50px;width:5.00px;height:444.50px;background:#f6f6f6;"></div>
<div class="b" style="left:882.50px;top:89.50px;width:0.50px;height:332.51px;background:#dcdcdc;"></div>
<div class="b" style="left:893.00px;top:89.50px;width:0.50px;height:274.80px;background:#dcdcdc;"></div>
<div class="b" style="left:893.00px;top:431.63px;width:0.50px;height:96.18px;background:#dcdcdc;"></div>
<div class="b" style="left:903.50px;top:89.50px;width:0.50px;height:43.97px;background:#dcdcdc;"></div>
<div class="b" style="left:903.50px;top:146.09px;width:0.50px;height:25.85px;background:#dcdcdc;"></div>
<div class="b" style="left:903.50px;top:184.56px;width:0.50px;height:64.33px;background:#dcdcdc;"></div>
<div class="b" style="left:903.50px;top:261.51px;width:0.50px;height:35.47px;background:#dcdcdc;"></div>
<div class="b" style="left:903.50px;top:309.60px;width:0.50px;height:16.24px;background:#dcdcdc;"></div>
<div class="b" style="left:903.50px;top:338.45px;width:0.50px;height:16.24px;background:#dcdcdc;"></div>
<div class="b" style="left:903.50px;top:367.30px;width:0.50px;height:25.85px;background:#dcdcdc;"></div>
<div class="b" style="left:903.50px;top:95.00px;width:8.00px;height:0.50px;background:#dcdcdc;"></div>
<span class="t" style="top:90.64px;font-size:6.7px;line-height:8.71px;color:#141414;left:912.60px;transform:scaleX(0.9450);transform-origin:0 50%;">Level 2</span>
<div class="b" style="left:903.50px;top:104.62px;width:8.00px;height:0.50px;background:#dcdcdc;"></div>
<span class="t" style="top:100.26px;font-size:6.7px;line-height:8.71px;color:#141414;left:912.60px;transform:scaleX(0.9450);transform-origin:0 50%;">Level 2 - Color Fill</span>
<div class="b" style="left:903.50px;top:114.24px;width:8.00px;height:0.50px;background:#dcdcdc;"></div>
<span class="t" style="top:109.88px;font-size:6.7px;line-height:8.71px;color:#141414;left:912.60px;transform:scaleX(0.9450);transform-origin:0 50%;">Level 2 - Restrooms</span>
<div class="b" style="left:903.50px;top:123.85px;width:8.00px;height:0.50px;background:#dcdcdc;"></div>
<span class="t" style="top:119.50px;font-size:6.7px;line-height:8.71px;color:#141414;left:912.60px;transform:scaleX(0.9450);transform-origin:0 50%;">Roof</span>
<div class="b" style="left:903.50px;top:133.47px;width:8.00px;height:0.50px;background:#dcdcdc;"></div>
<span class="t" style="top:129.12px;font-size:6.7px;line-height:8.71px;color:#141414;left:912.60px;transform:scaleX(0.9450);transform-origin:0 50%;">Site</span>
<div class="b" style="left:893.00px;top:143.09px;width:8.00px;height:0.50px;background:#dcdcdc;"></div>
<svg class="b" style="left:890.30px;top:140.59px" width="5" height="5" viewBox="0 0 5 5"><rect x="0.4" y="0.4" width="4.2" height="4.2" fill="#fff" stroke="#b0b0b0" stroke-width="0.6"/><path d="M1.3 2.5 h2.4" stroke="#777" stroke-width="0.6"/></svg>
<span class="t" style="top:138.74px;font-size:6.7px;line-height:8.71px;color:#141414;left:902.00px;transform:scaleX(0.9450);transform-origin:0 50%;">Ceiling Plans</span>
<div class="b" style="left:903.50px;top:152.71px;width:8.00px;height:0.50px;background:#dcdcdc;"></div>
<span class="t" style="top:148.35px;font-size:6.7px;line-height:8.71px;color:#141414;left:912.60px;transform:scaleX(0.9450);transform-origin:0 50%;">Level 1</span>
<div class="b" style="left:903.50px;top:162.33px;width:8.00px;height:0.50px;background:#dcdcdc;"></div>
<span class="t" style="top:157.97px;font-size:6.7px;line-height:8.71px;color:#141414;left:912.60px;transform:scaleX(0.9450);transform-origin:0 50%;">Level 2</span>
<div class="b" style="left:903.50px;top:171.94px;width:8.00px;height:0.50px;background:#dcdcdc;"></div>
<span class="t" style="top:167.59px;font-size:6.7px;line-height:8.71px;color:#141414;left:912.60px;transform:scaleX(0.9450);transform-origin:0 50%;">Roof</span>
<div class="b" style="left:893.00px;top:181.56px;width:8.00px;height:0.50px;background:#dcdcdc;"></div>
<svg class="b" style="left:890.30px;top:179.06px" width="5" height="5" viewBox="0 0 5 5"><rect x="0.4" y="0.4" width="4.2" height="4.2" fill="#fff" stroke="#b0b0b0" stroke-width="0.6"/><path d="M1.3 2.5 h2.4" stroke="#777" stroke-width="0.6"/></svg>
<span class="t" style="top:177.21px;font-size:6.7px;line-height:8.71px;color:#141414;left:902.00px;transform:scaleX(0.9450);transform-origin:0 50%;">3D Views</span>
<div class="b" style="left:903.50px;top:191.18px;width:8.00px;height:0.50px;background:#dcdcdc;"></div>
<span class="t" style="top:186.83px;font-size:6.7px;line-height:8.71px;color:#141414;left:912.60px;transform:scaleX(0.9450);transform-origin:0 50%;">3D View 1</span>
<div class="b" style="left:903.50px;top:200.80px;width:8.00px;height:0.50px;background:#dcdcdc;"></div>
<span class="t" style="top:196.44px;font-size:6.7px;line-height:8.71px;color:#141414;left:912.60px;transform:scaleX(0.9450);transform-origin:0 50%;">ISO-view-01</span>
<div class="b" style="left:903.50px;top:210.42px;width:8.00px;height:0.50px;background:#dcdcdc;"></div>
<span class="t" style="top:206.06px;font-size:6.7px;line-height:8.71px;color:#141414;left:912.60px;transform:scaleX(0.9450);transform-origin:0 50%;">ISO-view-02</span>
<div class="b" style="left:903.50px;top:220.03px;width:8.00px;height:0.50px;background:#dcdcdc;"></div>
<span class="t" style="top:215.68px;font-size:6.7px;line-height:8.71px;color:#141414;left:912.60px;transform:scaleX(0.9450);transform-origin:0 50%;">ISO-view-03</span>
<div class="b" style="left:903.50px;top:229.65px;width:8.00px;height:0.50px;background:#dcdcdc;"></div>
<span class="t" style="top:225.30px;font-size:6.7px;line-height:8.71px;color:#000;font-weight:bold;left:912.60px;transform:scaleX(0.9450);transform-origin:0 50%;">Perspective-Living-01</span>
<div class="b" style="left:903.50px;top:239.27px;width:8.00px;height:0.50px;background:#dcdcdc;"></div>
<span class="t" style="top:234.92px;font-size:6.7px;line-height:8.71px;color:#141414;left:912.60px;transform:scaleX(0.9450);transform-origin:0 50%;">Perspective-Living-01-Night</span>
<div class="b" style="left:903.50px;top:248.89px;width:8.00px;height:0.50px;background:#dcdcdc;"></div>
<span class="t" style="top:244.53px;font-size:6.7px;line-height:8.71px;color:#141414;left:912.60px;transform:scaleX(0.9450);transform-origin:0 50%;">Perspective-Living-02</span>
<div class="b" style="left:893.00px;top:258.51px;width:8.00px;height:0.50px;background:#dcdcdc;"></div>
<svg class="b" style="left:890.30px;top:256.01px" width="5" height="5" viewBox="0 0 5 5"><rect x="0.4" y="0.4" width="4.2" height="4.2" fill="#fff" stroke="#b0b0b0" stroke-width="0.6"/><path d="M1.3 2.5 h2.4" stroke="#777" stroke-width="0.6"/></svg>
<span class="t" style="top:254.15px;font-size:6.7px;line-height:8.71px;color:#141414;left:902.00px;transform:scaleX(0.9450);transform-origin:0 50%;">Elevations (Building Elevation)</span>
<div class="b" style="left:903.50px;top:268.12px;width:8.00px;height:0.50px;background:#dcdcdc;"></div>
<span class="t" style="top:263.77px;font-size:6.7px;line-height:8.71px;color:#141414;left:912.60px;transform:scaleX(0.9450);transform-origin:0 50%;">East</span>
<div class="b" style="left:903.50px;top:277.74px;width:8.00px;height:0.50px;background:#dcdcdc;"></div>
<span class="t" style="top:273.39px;font-size:6.7px;line-height:8.71px;color:#141414;left:912.60px;transform:scaleX(0.9450);transform-origin:0 50%;">North</span>
<div class="b" style="left:903.50px;top:287.36px;width:8.00px;height:0.50px;background:#dcdcdc;"></div>
<span class="t" style="top:283.00px;font-size:6.7px;line-height:8.71px;color:#141414;left:912.60px;transform:scaleX(0.9450);transform-origin:0 50%;">South</span>
<div class="b" style="left:903.50px;top:296.98px;width:8.00px;height:0.50px;background:#dcdcdc;"></div>
<span class="t" style="top:292.62px;font-size:6.7px;line-height:8.71px;color:#141414;left:912.60px;transform:scaleX(0.9450);transform-origin:0 50%;">West</span>
<div class="b" style="left:893.00px;top:306.60px;width:8.00px;height:0.50px;background:#dcdcdc;"></div>
<svg class="b" style="left:890.30px;top:304.10px" width="5" height="5" viewBox="0 0 5 5"><rect x="0.4" y="0.4" width="4.2" height="4.2" fill="#fff" stroke="#b0b0b0" stroke-width="0.6"/><path d="M1.3 2.5 h2.4" stroke="#777" stroke-width="0.6"/></svg>
<span class="t" style="top:302.24px;font-size:6.7px;line-height:8.71px;color:#141414;left:902.00px;transform:scaleX(0.9450);transform-origin:0 50%;">Elevations (Interior Elevation)</span>
<div class="b" style="left:903.50px;top:316.21px;width:8.00px;height:0.50px;background:#dcdcdc;"></div>
<span class="t" style="top:311.86px;font-size:6.7px;line-height:8.71px;color:#141414;left:912.60px;transform:scaleX(0.9450);transform-origin:0 50%;">E-LIVING-N</span>
<div class="b" style="left:903.50px;top:325.83px;width:8.00px;height:0.50px;background:#dcdcdc;"></div>
<span class="t" style="top:321.48px;font-size:6.7px;line-height:8.71px;color:#141414;left:912.60px;transform:scaleX(0.9450);transform-origin:0 50%;">E-Restroom 1 - W</span>
<div class="b" style="left:893.00px;top:335.45px;width:8.00px;height:0.50px;background:#dcdcdc;"></div>
<svg class="b" style="left:890.30px;top:332.95px" width="5" height="5" viewBox="0 0 5 5"><rect x="0.4" y="0.4" width="4.2" height="4.2" fill="#fff" stroke="#b0b0b0" stroke-width="0.6"/><path d="M1.3 2.5 h2.4" stroke="#777" stroke-width="0.6"/></svg>
<span class="t" style="top:331.10px;font-size:6.7px;line-height:8.71px;color:#141414;left:902.00px;transform:scaleX(0.9450);transform-origin:0 50%;">Sections (Building Section)</span>
<div class="b" style="left:903.50px;top:345.07px;width:8.00px;height:0.50px;background:#dcdcdc;"></div>
<span class="t" style="top:340.71px;font-size:6.7px;line-height:8.71px;color:#141414;left:912.60px;transform:scaleX(0.9450);transform-origin:0 50%;">S-Restroom 1 - W</span>
<div class="b" style="left:903.50px;top:354.69px;width:8.00px;height:0.50px;background:#dcdcdc;"></div>
<span class="t" style="top:350.33px;font-size:6.7px;line-height:8.71px;color:#141414;left:912.60px;transform:scaleX(0.9450);transform-origin:0 50%;">SECTION A-A'</span>
<div class="b" style="left:893.00px;top:364.30px;width:8.00px;height:0.50px;background:#dcdcdc;"></div>
<svg class="b" style="left:890.30px;top:361.80px" width="5" height="5" viewBox="0 0 5 5"><rect x="0.4" y="0.4" width="4.2" height="4.2" fill="#fff" stroke="#b0b0b0" stroke-width="0.6"/><path d="M1.3 2.5 h2.4" stroke="#777" stroke-width="0.6"/></svg>
<span class="t" style="top:359.95px;font-size:6.7px;line-height:8.71px;color:#141414;left:902.00px;transform:scaleX(0.9450);transform-origin:0 50%;">Renderings</span>
<div class="b" style="left:903.50px;top:373.92px;width:8.00px;height:0.50px;background:#dcdcdc;"></div>
<span class="t" style="top:369.57px;font-size:6.7px;line-height:8.71px;color:#141414;left:912.60px;transform:scaleX(0.9450);transform-origin:0 50%;">Perspective-Living-01_1</span>
<div class="b" style="left:903.50px;top:383.54px;width:8.00px;height:0.50px;background:#dcdcdc;"></div>
<span class="t" style="top:379.19px;font-size:6.7px;line-height:8.71px;color:#141414;left:912.60px;transform:scaleX(0.9450);transform-origin:0 50%;">Perspective-Living-01_2</span>
<div class="b" style="left:903.50px;top:393.16px;width:8.00px;height:0.50px;background:#dcdcdc;"></div>
<span class="t" style="top:388.80px;font-size:6.7px;line-height:8.71px;color:#141414;left:912.60px;transform:scaleX(0.9450);transform-origin:0 50%;">Perspective-Living-01_3</span>
<div class="b" style="left:882.50px;top:402.78px;width:5.00px;height:0.50px;background:#dcdcdc;"></div>
<svg class="b" style="left:888px;top:398.58px" width="9" height="8.4" viewBox="0 0 9 8.4"><rect x="0.4" y="0.4" width="8.2" height="7.6" fill="#f4f6f8" stroke="#5a6270" stroke-width="0.7"/><rect x="0.4" y="0.4" width="8.2" height="2" fill="#5a6270"/><path d="M0.4 4.6 h8.2 M3.2 2.4 v5.6 M6 2.4 v5.6" stroke="#8a93a0" stroke-width="0.5"/></svg>
<span class="t" style="top:398.42px;font-size:6.7px;line-height:8.71px;color:#141414;left:900.40px;transform:scaleX(0.9450);transform-origin:0 50%;">Legends</span>
<div class="b" style="left:882.50px;top:412.39px;width:5.00px;height:0.50px;background:#dcdcdc;"></div>
<svg class="b" style="left:888px;top:408.19px" width="9" height="8.4" viewBox="0 0 9 8.4"><rect x="0.4" y="0.4" width="8.2" height="7.6" fill="#f4f6f8" stroke="#5a6270" stroke-width="0.7"/><rect x="0.4" y="0.4" width="8.2" height="2" fill="#5a6270"/><path d="M0.4 4.6 h8.2 M3.2 2.4 v5.6 M6 2.4 v5.6" stroke="#8a93a0" stroke-width="0.5"/></svg>
<span class="t" style="top:408.04px;font-size:6.7px;line-height:8.71px;color:#141414;left:900.40px;transform:scaleX(0.9450);transform-origin:0 50%;">Schedules/Quantities (all)</span>
<svg class="b" style="left:880.20px;top:419.51px" width="5" height="5" viewBox="0 0 5 5"><rect x="0.4" y="0.4" width="4.2" height="4.2" fill="#fff" stroke="#b0b0b0" stroke-width="0.6"/><path d="M1.3 2.5 h2.4" stroke="#777" stroke-width="0.6"/></svg>
<svg class="b" style="left:888px;top:417.81px" width="9" height="8.4" viewBox="0 0 9 8.4"><rect x="0.4" y="0.8" width="8.2" height="7.2" fill="#f4f6f8" stroke="#5a6270" stroke-width="0.7"/><path d="M2 2.6 h5 v3.8 h-5 z M4.5 2.6 v3.8" stroke="#7a8494" stroke-width="0.5" fill="#dfe6f0"/></svg>
<span class="t" style="top:417.66px;font-size:6.7px;line-height:8.71px;color:#141414;left:900.40px;transform:scaleX(0.9450);transform-origin:0 50%;">Sheets (all)</span>
<div class="b" style="left:893.00px;top:431.63px;width:8.00px;height:0.50px;background:#dcdcdc;"></div>
<svg class="b" style="left:890.30px;top:429.13px" width="5" height="5" viewBox="0 0 5 5"><rect x="0.4" y="0.4" width="4.2" height="4.2" fill="#fff" stroke="#b0b0b0" stroke-width="0.6"/><path d="M1.3 2.5 h2.4" stroke="#777" stroke-width="0.6"/><path d="M2.5 1.3 v2.4" stroke="#555" stroke-width="0.6"/></svg>
<span class="t" style="top:427.27px;font-size:6.7px;line-height:8.71px;color:#141414;left:901.80px;transform:scaleX(0.9450);transform-origin:0 50%;">A100 - Site Plan</span>
<div class="b" style="left:893.00px;top:441.25px;width:8.00px;height:0.50px;background:#dcdcdc;"></div>
<svg class="b" style="left:890.30px;top:438.75px" width="5" height="5" viewBox="0 0 5 5"><rect x="0.4" y="0.4" width="4.2" height="4.2" fill="#fff" stroke="#b0b0b0" stroke-width="0.6"/><path d="M1.3 2.5 h2.4" stroke="#777" stroke-width="0.6"/><path d="M2.5 1.3 v2.4" stroke="#555" stroke-width="0.6"/></svg>
<span class="t" style="top:436.89px;font-size:6.7px;line-height:8.71px;color:#141414;left:901.80px;transform:scaleX(0.9450);transform-origin:0 50%;">A101 - Floor Plan - Level 1</span>
<div class="b" style="left:893.00px;top:450.87px;width:8.00px;height:0.50px;background:#dcdcdc;"></div>
<svg class="b" style="left:890.30px;top:448.37px" width="5" height="5" viewBox="0 0 5 5"><rect x="0.4" y="0.4" width="4.2" height="4.2" fill="#fff" stroke="#b0b0b0" stroke-width="0.6"/><path d="M1.3 2.5 h2.4" stroke="#777" stroke-width="0.6"/><path d="M2.5 1.3 v2.4" stroke="#555" stroke-width="0.6"/></svg>
<span class="t" style="top:446.51px;font-size:6.7px;line-height:8.71px;color:#141414;left:901.80px;transform:scaleX(0.9450);transform-origin:0 50%;">A101-C - Color filled - Level 1</span>
<div class="b" style="left:893.00px;top:460.48px;width:8.00px;height:0.50px;background:#dcdcdc;"></div>
<svg class="b" style="left:890.30px;top:457.98px" width="5" height="5" viewBox="0 0 5 5"><rect x="0.4" y="0.4" width="4.2" height="4.2" fill="#fff" stroke="#b0b0b0" stroke-width="0.6"/><path d="M1.3 2.5 h2.4" stroke="#777" stroke-width="0.6"/><path d="M2.5 1.3 v2.4" stroke="#555" stroke-width="0.6"/></svg>
<span class="t" style="top:456.13px;font-size:6.7px;line-height:8.71px;color:#141414;left:901.80px;transform:scaleX(0.9450);transform-origin:0 50%;">A102 - Floor Plan - Level 2</span>
<div class="b" style="left:893.00px;top:470.10px;width:8.00px;height:0.50px;background:#dcdcdc;"></div>
<svg class="b" style="left:890.30px;top:467.60px" width="5" height="5" viewBox="0 0 5 5"><rect x="0.4" y="0.4" width="4.2" height="4.2" fill="#fff" stroke="#b0b0b0" stroke-width="0.6"/><path d="M1.3 2.5 h2.4" stroke="#777" stroke-width="0.6"/><path d="M2.5 1.3 v2.4" stroke="#555" stroke-width="0.6"/></svg>
<span class="t" style="top:465.75px;font-size:6.7px;line-height:8.71px;color:#141414;left:901.80px;transform:scaleX(0.9450);transform-origin:0 50%;">A102-C - Color filled - Level 2</span>
<div class="b" style="left:893.00px;top:479.72px;width:8.00px;height:0.50px;background:#dcdcdc;"></div>
<svg class="b" style="left:890.30px;top:477.22px" width="5" height="5" viewBox="0 0 5 5"><rect x="0.4" y="0.4" width="4.2" height="4.2" fill="#fff" stroke="#b0b0b0" stroke-width="0.6"/><path d="M1.3 2.5 h2.4" stroke="#777" stroke-width="0.6"/><path d="M2.5 1.3 v2.4" stroke="#555" stroke-width="0.6"/></svg>
<span class="t" style="top:475.37px;font-size:6.7px;line-height:8.71px;color:#141414;left:901.80px;transform:scaleX(0.9450);transform-origin:0 50%;">A401 - RCP - Level 2</span>
<div class="b" style="left:893.00px;top:489.34px;width:8.00px;height:0.50px;background:#dcdcdc;"></div>
<svg class="b" style="left:890.30px;top:486.84px" width="5" height="5" viewBox="0 0 5 5"><rect x="0.4" y="0.4" width="4.2" height="4.2" fill="#fff" stroke="#b0b0b0" stroke-width="0.6"/><path d="M1.3 2.5 h2.4" stroke="#777" stroke-width="0.6"/><path d="M2.5 1.3 v2.4" stroke="#555" stroke-width="0.6"/></svg>
<span class="t" style="top:484.98px;font-size:6.7px;line-height:8.71px;color:#141414;left:901.80px;transform:scaleX(0.9450);transform-origin:0 50%;">A402 - RCP - Level 1</span>
<div class="b" style="left:893.00px;top:498.96px;width:8.00px;height:0.50px;background:#dcdcdc;"></div>
<svg class="b" style="left:890.30px;top:496.46px" width="5" height="5" viewBox="0 0 5 5"><rect x="0.4" y="0.4" width="4.2" height="4.2" fill="#fff" stroke="#b0b0b0" stroke-width="0.6"/><path d="M1.3 2.5 h2.4" stroke="#777" stroke-width="0.6"/><path d="M2.5 1.3 v2.4" stroke="#555" stroke-width="0.6"/></svg>
<span class="t" style="top:494.60px;font-size:6.7px;line-height:8.71px;color:#141414;left:901.80px;transform:scaleX(0.9450);transform-origin:0 50%;">A501 - Interior Section</span>
<div class="b" style="left:893.00px;top:508.57px;width:8.00px;height:0.50px;background:#dcdcdc;"></div>
<svg class="b" style="left:890.30px;top:506.07px" width="5" height="5" viewBox="0 0 5 5"><rect x="0.4" y="0.4" width="4.2" height="4.2" fill="#fff" stroke="#b0b0b0" stroke-width="0.6"/><path d="M1.3 2.5 h2.4" stroke="#777" stroke-width="0.6"/><path d="M2.5 1.3 v2.4" stroke="#555" stroke-width="0.6"/></svg>
<span class="t" style="top:504.22px;font-size:6.7px;line-height:8.71px;color:#141414;left:901.80px;transform:scaleX(0.9450);transform-origin:0 50%;">A601 - Interior Elevation</span>
<div class="b" style="left:893.00px;top:518.19px;width:8.00px;height:0.50px;background:#dcdcdc;"></div>
<svg class="b" style="left:890.30px;top:515.69px" width="5" height="5" viewBox="0 0 5 5"><rect x="0.4" y="0.4" width="4.2" height="4.2" fill="#fff" stroke="#b0b0b0" stroke-width="0.6"/><path d="M1.3 2.5 h2.4" stroke="#777" stroke-width="0.6"/><path d="M2.5 1.3 v2.4" stroke="#555" stroke-width="0.6"/></svg>
<span class="t" style="top:513.84px;font-size:6.7px;line-height:8.71px;color:#141414;left:901.80px;transform:scaleX(0.9450);transform-origin:0 50%;">A701 - Restroom 1</span>
<div class="b" style="left:893.00px;top:527.81px;width:8.00px;height:0.50px;background:#dcdcdc;"></div>
<svg class="b" style="left:890.30px;top:525.31px" width="5" height="5" viewBox="0 0 5 5"><rect x="0.4" y="0.4" width="4.2" height="4.2" fill="#fff" stroke="#b0b0b0" stroke-width="0.6"/><path d="M1.3 2.5 h2.4" stroke="#777" stroke-width="0.6"/><path d="M2.5 1.3 v2.4" stroke="#555" stroke-width="0.6"/></svg>
<span class="t" style="top:523.45px;font-size:6.7px;line-height:8.71px;color:#141414;left:901.80px;transform:scaleX(0.9450);transform-origin:0 50%;">A901 - Perspective - Living 1</span>
<div class="b" style="left:1015.50px;top:89.50px;width:8.50px;height:443.50px;background:#f0f0f0;"></div>
<div class="b" style="left:1015.50px;top:131.00px;width:8.50px;height:371.00px;background:#cdcdcd;"></div>
<svg class="b" style="left:1017px;top:92px" width="6" height="5" viewBox="0 0 6 5"><path d="M0.8 3.8 L3 1.4 L5.2 3.8" stroke="#444" stroke-width="0.9" fill="none"/></svg>
<svg class="b" style="left:1017px;top:526.5px" width="6" height="5" viewBox="0 0 6 5"><path d="M0.8 1.2 L3 3.6 L5.2 1.2" stroke="#444" stroke-width="0.9" fill="none"/></svg>
<svg class="b" style="left:199px;top:120px" width="608" height="385" viewBox="199 120 608 385">
<defs>
<clipPath id="cimg"><rect x="199" y="142" width="608" height="341.2"/></clipPath>
<filter id="bl1" x="-20%" y="-20%" width="140%" height="140%"><feGaussianBlur stdDeviation="1"/></filter>
<filter id="bl2" x="-20%" y="-20%" width="140%" height="140%"><feGaussianBlur stdDeviation="2.2"/></filter>
<filter id="bl4" x="-30%" y="-30%" width="160%" height="160%"><feGaussianBlur stdDeviation="4"/></filter>
<filter id="bl05" x="-10%" y="-10%" width="120%" height="120%"><feGaussianBlur stdDeviation="0.5"/></filter>
<linearGradient id="gwood" x1="0" y1="142" x2="0" y2="400" gradientUnits="userSpaceOnUse">
 <stop offset="0" stop-color="#9a5420"/><stop offset="0.2" stop-color="#a86026"/><stop offset="0.4" stop-color="#bd7a2f"/><stop offset="0.62" stop-color="#cd8f3b"/><stop offset="1" stop-color="#cc9246"/></linearGradient>
<linearGradient id="gslat" x1="0" y1="142" x2="0" y2="360" gradientUnits="userSpaceOnUse">
 <stop offset="0" stop-color="#a2602a"/><stop offset="0.27" stop-color="#b27236"/><stop offset="0.5" stop-color="#c68c4c"/><stop offset="0.68" stop-color="#d8a868"/><stop offset="0.86" stop-color="#e4c48c"/><stop offset="1" stop-color="#e8cc9c"/></linearGradient>
<linearGradient id="gslatx" x1="628" y1="0" x2="712" y2="0" gradientUnits="userSpaceOnUse">
 <stop offset="0" stop-color="#3a1800" stop-opacity="0.22"/><stop offset="0.3" stop-color="#3a1800" stop-opacity="0.04"/><stop offset="1" stop-color="#000" stop-opacity="0"/></linearGradient>
<linearGradient id="gnavl" x1="199" y1="0" x2="256" y2="0" gradientUnits="userSpaceOnUse"><stop offset="0" stop-color="#0d1230"/><stop offset="0.25" stop-color="#0c102a"/><stop offset="0.5" stop-color="#0a0c1c"/><stop offset="0.8" stop-color="#07080e"/><stop offset="1" stop-color="#060608"/></linearGradient>
<linearGradient id="gbase" x1="640" y1="0" x2="807" y2="0" gradientUnits="userSpaceOnUse"><stop offset="0" stop-color="#e6cc9e"/><stop offset="0.3" stop-color="#d2a364"/><stop offset="1" stop-color="#c08a48"/></linearGradient>
<linearGradient id="gbeige" x1="0" y1="142" x2="0" y2="245" gradientUnits="userSpaceOnUse">
 <stop offset="0" stop-color="#bfa790"/><stop offset="1" stop-color="#ab937e"/></linearGradient>
<linearGradient id="gfloor" x1="199" y1="430" x2="310" y2="470" gradientUnits="userSpaceOnUse">
 <stop offset="0" stop-color="#786858"/><stop offset="0.4" stop-color="#8c7c6c"/><stop offset="1" stop-color="#a29282"/></linearGradient>
<linearGradient id="gnavy" x1="0" y1="170" x2="0" y2="250" gradientUnits="userSpaceOnUse">
 <stop offset="0" stop-color="#0b0f24"/><stop offset="0.5" stop-color="#10173a"/><stop offset="1" stop-color="#141d40"/></linearGradient>
<linearGradient id="glamp" x1="0" y1="0" x2="1" y2="0"><stop offset="0" stop-color="#b89e7c"/><stop offset="0.45" stop-color="#e8d8bc"/><stop offset="1" stop-color="#b49878"/></linearGradient>
<linearGradient id="grug" x1="440" y1="0" x2="650" y2="0" gradientUnits="userSpaceOnUse">
 <stop offset="0" stop-color="#38526e"/><stop offset="0.25" stop-color="#6a829c"/><stop offset="0.55" stop-color="#93a5b8"/><stop offset="0.8" stop-color="#bec8d2"/><stop offset="1" stop-color="#d2d8de"/></linearGradient>
<linearGradient id="gwhitefl" x1="0" y1="354" x2="0" y2="408" gradientUnits="userSpaceOnUse">
 <stop offset="0" stop-color="#d6d2cc"/><stop offset="1" stop-color="#e4e0da"/></linearGradient>
</defs>
<rect x="199" y="120" width="608" height="385" fill="#000"/>
<g clip-path="url(#cimg)">

<rect x="199" y="142" width="430" height="342" fill="#060608"/>
<!-- ========== upper-left ========== -->
<polygon points="199,143 280,189 280,256 199,256" fill="url(#gnavl)"/>
<polygon points="199,142 201,143 330,216.4 330,229 199,154.5" fill="#030304"/>

<polygon points="201,143 312,143 312,206" fill="url(#gbeige)"/>
<polygon points="321.3,143 381,143 381,245 321.3,211" fill="url(#gbeige)"/>
<rect x="381" y="142" width="6" height="115" fill="#050506"/>
<!-- ========== window wall ========== -->
<rect x="386" y="142" width="241" height="114" fill="#050507"/>
<rect x="387" y="175" width="207" height="72" fill="url(#gnavy)"/>
<g fill="#907860">
<rect x="458.5" y="143" width="40" height="15"/><rect x="500.3" y="143" width="39.5" height="15"/><rect x="547" y="143" width="37.3" height="15"/><rect x="587" y="143" width="18" height="15"/>
<rect x="397" y="146.6" width="19" height="6.2"/><rect x="420.6" y="146.6" width="30" height="6.2"/>
</g>
<g fill="#806a54">
<rect x="458.5" y="161.7" width="40" height="3.6"/><rect x="500.3" y="161.7" width="39.5" height="3.6"/><rect x="547" y="161.7" width="37.3" height="3.6"/><rect x="587" y="161.7" width="18" height="3.6"/>
<rect x="403" y="158" width="13" height="6.6"/><rect x="420.6" y="158" width="30" height="6.6"/>
<rect x="458.5" y="171.3" width="40" height="3.4"/><rect x="500.3" y="171.3" width="39.5" height="3.4"/><rect x="547" y="171.3" width="37.3" height="3.4"/><rect x="587" y="171.3" width="10" height="3.4"/>
<rect x="420.6" y="171.7" width="30" height="3.3"/><rect x="412" y="171.7" width="4" height="3.3"/>
</g>
<g fill="#06070d">
<rect x="386" y="175" width="66" height="5.7"/><rect x="386" y="187" width="66" height="4.8"/><rect x="386" y="198.5" width="66" height="5.5"/><rect x="386" y="209.6" width="66" height="5.4"/><rect x="386" y="220.7" width="66" height="5.3"/><rect x="386" y="232" width="66" height="15"/>
<rect x="416" y="142" width="4.6" height="110"/><rect x="386" y="175" width="30" height="80" opacity="0.5"/><rect x="420" y="175" width="32" height="80" opacity="0.2"/>
</g>
<g fill="#040406">
<rect x="452" y="142" width="6" height="110"/><rect x="540.5" y="142" width="6" height="110"/><rect x="584.6" y="142" width="2.4" height="110"/>
<rect x="498.6" y="142" width="1.7" height="110"/>
<rect x="452" y="187" width="176" height="3"/><rect x="452" y="216.3" width="176" height="2.4"/>
<rect x="386" y="158.5" width="242" height="3"/><rect x="386" y="166" width="242" height="5"/>
</g>
<g fill="#05060b" filter="url(#bl1)">
<ellipse cx="476" cy="230" rx="16" ry="25"/><ellipse cx="440" cy="243" rx="22" ry="20" opacity="0.75"/><ellipse cx="518" cy="247" rx="14" ry="10"/><rect x="386" y="243" width="200" height="16"/>
</g>
<!-- glass reflecting wood right of window -->
<polygon points="594,176 605,172 623.4,160 623.4,340 594,340" fill="#7c4418"/>
<polygon points="605,143 623.4,143 605,160" fill="#9a8068"/>
<polygon points="623.4,143 623.4,160 608,160" fill="#5a3214"/>
<g fill="#0a0604"><rect x="594" y="157.5" width="30" height="2.5"/><rect x="594" y="187" width="30" height="3"/><rect x="594" y="216.3" width="30" height="2.4"/><rect x="594" y="246" width="34" height="10"/></g>
<rect x="623.4" y="142" width="4.6" height="212" fill="#0c0806"/>
<!-- ========== middle band ========== -->
<polygon points="547,256 594,256 594,272 566,287 551,277" fill="#182142"/>
<polygon points="566,287 594,272 594,326 540,326 540,300 552,296" fill="#261a11"/>
<rect x="540" y="256" width="5" height="70" fill="#060606"/>
<rect x="594" y="256" width="11" height="82" fill="#a46428"/>
<rect x="605" y="256" width="18.4" height="94" fill="#bc8444"/>
<g stroke="#5a3010" stroke-width="0.7" opacity="0.6"><path d="M598 256 V338 M602 256 V338 M609 256 V350 M614 256 V350 M619 256 V350"/></g>
<!-- ========== wood wall ========== -->
<rect x="628" y="142" width="180" height="342" fill="url(#gwood)"/>
<polygon points="628,142 712,142 700,200 660,256 660,360 628,360" fill="url(#gslat)"/>
<rect x="628" y="142" width="84" height="218" fill="url(#gslatx)"/>
<g stroke="#d8a060" stroke-width="0.8" opacity="0.4"><path d="M640 142 V250 M648 142 V250 M655.5 142 V250 M663 142 V200 M671 142 V190 M679 142 V186 M687 142 V182 M695 142 V178 M703 142 V170"/></g>
<g stroke="#8a5a24" stroke-width="0.7" opacity="0.45"><path d="M634 250 V352 M641 250 V352 M648 250 V352 M655 250 V352"/></g>
<g fill="#4e200c">
<rect x="659" y="190.7" width="16.7" height="17.8"/><rect x="671.8" y="199.6" width="20.1" height="20"/>
<rect x="725.8" y="142" width="28" height="23"/><rect x="725.8" y="194" width="26.8" height="28"/>
<rect x="761.5" y="142" width="32.3" height="15"/><rect x="659.7" y="230.8" width="16" height="17.8"/><rect x="676.8" y="243" width="20.1" height="14"/>
<rect x="761.5" y="200" width="30" height="8" fill="#5a2a10"/>
</g>
<g fill="#6a3212">
<rect x="676.8" y="287.9" width="20.1" height="21.8"/><rect x="676.8" y="333.5" width="20.1" height="21.2"/>
<rect x="659.7" y="311" width="7.5" height="19"/><rect x="725.8" y="256.7" width="12.2" height="23.3"/>
<rect x="727.4" y="310" width="32" height="7"/><rect x="764.8" y="274" width="42" height="7"/><rect x="764.8" y="343" width="42" height="7"/>
<rect x="659.7" y="268" width="4" height="22"/>
</g>
<g stroke="#8a5220" stroke-width="0.5" opacity="0.5"><path d="M697 165 V360 M725 150 V360 M760 150 V360 M660 287 H807 M660 310 H807 M660 333 H807 M660 256 H807"/></g>
<rect x="699.0" y="181.8" width="1.90" height="25.0" fill="#e8e2d8"/><rect x="701.9" y="181.2" width="1.90" height="25.0" fill="#e8e2d8"/><rect x="704.8" y="180.6" width="1.90" height="25.0" fill="#e8e2d8"/><rect x="707.8" y="180.0" width="1.90" height="25.0" fill="#e8e2d8"/><rect x="710.7" y="179.4" width="1.90" height="25.0" fill="#e8e2d8"/><rect x="713.6" y="178.8" width="10.4" height="25.0" fill="#2a221c"/><rect x="764.8" y="211.0" width="3.19" height="28.0" fill="#e8e2d8"/><rect x="769.7" y="210.2" width="3.19" height="28.0" fill="#e8e2d8"/><rect x="774.6" y="209.4" width="3.19" height="28.0" fill="#e8e2d8"/><rect x="779.5" y="208.6" width="3.19" height="28.0" fill="#e8e2d8"/><rect x="784.4" y="207.8" width="3.19" height="28.0" fill="#e8e2d8"/><rect x="789.3" y="207.0" width="17.0" height="28.0" fill="#2a221c"/><rect x="708.2" y="234.0" width="2.08" height="19.5" fill="#e8e2d8"/><rect x="711.4" y="233.7" width="2.08" height="19.5" fill="#e8e2d8"/><rect x="714.6" y="233.4" width="2.08" height="19.5" fill="#e8e2d8"/><rect x="717.8" y="233.1" width="2.08" height="19.5" fill="#e8e2d8"/><rect x="721.0" y="232.8" width="2.08" height="19.5" fill="#e8e2d8"/><rect x="733.0" y="247.0" width="2.60" height="9.0" fill="#e8e2d8"/><rect x="737.0" y="247.0" width="2.60" height="9.0" fill="#e8e2d8"/><rect x="741.0" y="247.0" width="2.60" height="9.0" fill="#e8e2d8"/><rect x="745.0" y="247.0" width="2.60" height="9.0" fill="#e8e2d8"/><rect x="663.5" y="271.0" width="1.98" height="19.0" fill="#e8e2d8"/><rect x="666.5" y="271.0" width="1.98" height="19.0" fill="#e8e2d8"/><rect x="669.6" y="271.0" width="1.98" height="19.0" fill="#e8e2d8"/><rect x="672.6" y="271.0" width="1.98" height="19.0" fill="#e8e2d8"/><rect x="700.0" y="290.0" width="1.77" height="19.7" fill="#e8e2d8"/><rect x="702.7" y="290.0" width="1.77" height="19.7" fill="#e8e2d8"/><rect x="705.4" y="290.0" width="1.77" height="19.7" fill="#e8e2d8"/><rect x="708.2" y="290.0" width="1.77" height="19.7" fill="#e8e2d8"/><rect x="710.9" y="290.0" width="1.77" height="19.7" fill="#e8e2d8"/><rect x="713.6" y="290.0" width="10.4" height="19.7" fill="#2a221c"/><rect x="738.0" y="254.0" width="2.27" height="23.8" fill="#e8e2d8"/><rect x="741.5" y="254.0" width="2.27" height="23.8" fill="#e8e2d8"/><rect x="745.0" y="254.0" width="2.27" height="23.8" fill="#e8e2d8"/><rect x="748.5" y="254.0" width="2.27" height="23.8" fill="#e8e2d8"/><rect x="752.0" y="254.0" width="2.27" height="23.8" fill="#e8e2d8"/><rect x="755.5" y="254.0" width="2.27" height="23.8" fill="#e8e2d8"/><rect x="764.8" y="281.0" width="3.33" height="26.5" fill="#e8e2d8"/><rect x="769.9" y="281.0" width="3.33" height="26.5" fill="#e8e2d8"/><rect x="775.0" y="281.0" width="3.33" height="26.5" fill="#e8e2d8"/><rect x="780.2" y="281.0" width="3.33" height="26.5" fill="#e8e2d8"/><rect x="785.3" y="281.0" width="3.33" height="26.5" fill="#e8e2d8"/><rect x="790.4" y="281.0" width="16.6" height="26.5" fill="#2a221c"/><rect x="727.4" y="316.8" width="2.55" height="22.2" fill="#e8e2d8"/><rect x="731.3" y="316.8" width="2.55" height="22.2" fill="#e8e2d8"/><rect x="735.2" y="316.8" width="2.55" height="22.2" fill="#e8e2d8"/><rect x="739.2" y="316.8" width="2.55" height="22.2" fill="#e8e2d8"/><rect x="743.1" y="316.8" width="2.55" height="22.2" fill="#e8e2d8"/><rect x="747.0" y="316.8" width="12.0" height="22.2" fill="#2a221c"/><rect x="666.8" y="315.7" width="1.93" height="15.3" fill="#e8e2d8"/><rect x="669.8" y="315.7" width="1.93" height="15.3" fill="#e8e2d8"/><rect x="672.7" y="315.7" width="1.93" height="15.3" fill="#e8e2d8"/><rect x="767.0" y="350.0" width="3.19" height="24.0" fill="#e8e2d8"/><rect x="771.9" y="350.0" width="3.19" height="24.0" fill="#e8e2d8"/><rect x="776.8" y="350.0" width="3.19" height="24.0" fill="#e8e2d8"/><rect x="781.7" y="350.0" width="3.19" height="24.0" fill="#e8e2d8"/><rect x="786.6" y="350.0" width="3.19" height="24.0" fill="#e8e2d8"/><rect x="791.5" y="350.0" width="15.5" height="24.0" fill="#2a221c"/><rect x="711.0" y="343.5" width="2.05" height="20.0" fill="#e8e2d8"/><rect x="714.1" y="343.5" width="2.05" height="20.0" fill="#e8e2d8"/><rect x="717.3" y="343.5" width="2.05" height="20.0" fill="#e8e2d8"/><rect x="720.5" y="343.5" width="2.05" height="20.0" fill="#e8e2d8"/>
<!-- shelf base slats -->
<polygon points="628,352 660,352 807,366 807,410 700,378 640,362 628,360" fill="url(#gbase)"/>
<g stroke="#a87838" stroke-width="0.7" opacity="0.55"><path d="M668 354 V369 M678 355 V372 M688 356 V374 M700 357 V377 M710 358 V380 M720 360 V383 M730 361 V385 M740 363 V388 M750 364 V391 M760 366 V393 M770 367 V396 M780 369 V399 M790 370 V401 M800 372 V404"/></g>
<rect x="677" y="340" width="19.5" height="15" fill="#7a3a18"/>
<!-- ========== floor ========== -->
<polygon points="199,384 300,372 343,354.5 480,354.5 650,366 807,406 807,484 199,484" fill="#958577"/>
<rect x="199" y="412" width="112" height="72" fill="url(#gfloor)"/>
<!-- white floor -->
<polygon points="343,354.5 476,354.5 476,377.5 432,377.5 408,407.6 310,407.6 270,404 285,380 318,366" fill="url(#gwhitefl)"/>
<path d="M276 402 Q300 392 330 396 L348 384 L420 380 L420 407.6 L300 410 Z" fill="#f1eeea"/>
<!-- dark under table -->
<polygon points="199,384 262,380 274,384 270,398 240,404 199,416" fill="#120c08"/>
<polygon points="272,378 345,374 340,390 300,400 262,404" fill="#7e7268"/>
<polygon points="199,414 266,400 310,404 310,420 237,418 199,424" fill="#6e5c4c" filter="url(#bl1)"/>
<polygon points="226,404 282,401 282,408 226,416" fill="#b0a294" filter="url(#bl05)"/>
<polygon points="237,412 309,408 309,418 240,419" fill="#4c3a2a" filter="url(#bl1)"/>
<!-- tan strip -->
<polygon points="432.2,377.6 462,377.6 442.6,407.6 408,407.6" fill="#c8a06c"/>
<!-- shadow band on white floor -->
<polygon points="406,369.5 470,369.5 470,377.5 432,377.5 398,376" fill="#4a2c1a"/>
<!-- brown strip behind rug -->
<polygon points="467,354.5 608,354.5 622,371 467,371" fill="#3e2012"/>
<polygon points="436,359 452,359 467,362 467,370 440,369" fill="#3a2416"/>
<rect x="467.5" y="370.3" width="172" height="6.8" fill="#d6c8ba"/>
<!-- blue rug -->
<polygon points="464.5,377 640,374.5 700,392 700,408 443,408" fill="url(#grug)"/>
<g filter="url(#bl1)" opacity="0.85">
<ellipse cx="468" cy="398" rx="14" ry="9" fill="#22344e"/><ellipse cx="492" cy="384" rx="12" ry="3.5" fill="#2a3e5a"/><ellipse cx="505" cy="402" rx="22" ry="5" fill="#1e2e46"/>
<ellipse cx="476" cy="388" rx="5" ry="8" fill="#8aa0b8"/><ellipse cx="515" cy="380" rx="12" ry="3" fill="#90a6bc"/>
<ellipse cx="600" cy="380" rx="26" ry="5" fill="#c4ced8"/><ellipse cx="620" cy="398" rx="24" ry="7" fill="#d4dae0"/>
</g>
<ellipse cx="543" cy="391" rx="43" ry="9.2" fill="#08080a"/>
<path d="M547 371.5 L525 379 M547 371.5 L586 392" stroke="#16120f" stroke-width="2.4" fill="none"/><path d="M547 345 V372" stroke="#16120f" stroke-width="1.6" fill="none"/>
<!-- right floor under bench -->
<polygon points="640,392 700,392 807,426 807,484 696,484 696,408" fill="#b68a58"/>
<polygon points="696,420 730,414 807,438 807,467 696,460" fill="#80502a"/>
<polygon points="696,410 716,410 760,424 696,432" fill="#c8a070"/>
<polygon points="696,464 807,468 807,484 696,484" fill="#c8ae90"/>
<!-- white bench -->
<polygon points="609,354 645,360 730,383 807,408 807,432 700,398 640,377 598,363" fill="#e6e2dc"/>
<polygon points="598,363 640,377 700,398 807,432 807,436 700,402 640,381 598,366" fill="#b8a892"/>
<rect x="599" y="362" width="2.5" height="10" fill="#d8d4cc"/>
<!-- ========== sofa / man / table ========== -->
<rect x="519" y="324.6" width="82" height="31" fill="#2a2624"/>
<rect x="519" y="343" width="80" height="13" fill="#38322e"/>
<rect x="593.7" y="333" width="14.3" height="25.6" fill="#1e1a18"/>
<rect x="483" y="333" width="14" height="24" fill="#0c0a0a"/>
<rect x="480.6" y="327" width="12" height="31" fill="#1c1816"/>
<path d="M489 320 Q490 313.5 497 311.5 L506 310 L515 310.5 Q521.5 312.5 522.3 318 L521.5 338 L498 341 L494.5 330 Z" fill="#b4b49c"/>
<path d="M491 319 L485.5 330.5 L493 339.5" stroke="#9a6444" stroke-width="4.2" fill="none" stroke-linecap="round" stroke-linejoin="round"/>
<path d="M520.5 324 L517.5 334 L505 341.5" stroke="#a26c4a" stroke-width="4" fill="none" stroke-linecap="round" stroke-linejoin="round"/>
<ellipse cx="510" cy="304" rx="5" ry="6" fill="#a87656"/>
<path d="M504.5 301.5 Q505.5 296 511 296.2 Q516.5 297 515.8 302.5 Q512 299 504.5 301.5 Z" fill="#3a2a1e"/>
<path d="M491.5 339 L524 341.5 Q528 345 526.5 352 L525 371 L517.5 371 L517 352.5 L504 351.5 L502.5 371.5 L493.5 371.5 L492 352 Z" fill="#e2d8ca"/>
<ellipse cx="549" cy="342.6" rx="33" ry="4" fill="#8a8078"/>
<ellipse cx="549" cy="341" rx="34" ry="4.4" fill="#efebe6"/>
<!-- ========== plants ========== -->
<g filter="url(#bl1)">
<ellipse cx="378" cy="308" rx="18" ry="27" fill="#172c15"/><ellipse cx="388" cy="300" rx="13" ry="18" fill="#264620"/>
<ellipse cx="356" cy="331" rx="17" ry="8" fill="#2a4626"/><ellipse cx="410" cy="312" rx="16" ry="28" fill="#1a3418"/>
<ellipse cx="418" cy="334" rx="14" ry="5" fill="#345c30"/><ellipse cx="396" cy="290" rx="8" ry="8" fill="#2c5026"/>
<ellipse cx="366" cy="322" rx="8" ry="5" fill="#3e6a38"/><ellipse cx="404" cy="326" rx="8" ry="4" fill="#3c6a36"/>
</g>
<polygon points="351.5,342.5 390.5,342.5 388,359.2 355,359.2" fill="#a23a1a"/>
<polygon points="390,340 402,340 402,358 390,358" fill="#7a2c14"/>
<polygon points="402.5,340.6 426.7,340.6 423,363.8 406,363.8" fill="#b04820"/>
<!-- stool -->
<path d="M451 351 H469.5 L466 358 L468.5 368 L467 376.5 H453.5 L452 368 L454.5 358 Z" fill="#9a5a30"/>
<!-- coat stand -->
<rect x="455" y="290" width="4" height="62" fill="#050505"/>
<rect x="447.5" y="300" width="4.5" height="12" fill="#c8c0b4"/>
<!-- ========== lounge chair & tables (left) ========== -->
<rect x="199" y="342.5" width="41" height="3.6" fill="#4a2412"/>
<rect x="199" y="354" width="50" height="4.6" fill="#b8b4b0"/>
<rect x="220" y="346" width="6" height="26" fill="#6a3418"/>
<polygon points="241.3,320.8 286.2,320.2 289.6,337.8 245.4,345.3" fill="#c2b8ae"/>
<polygon points="249,351.8 299.2,346.2 301,355 252,364" fill="#cdc4ba"/>
<polygon points="300,350 333.6,345 332.6,350 329,356.4 302,363.8" fill="#c8c0b8"/>
<polygon points="303,364.8 340,355.5 343.8,361 317.8,372.2" fill="#f2eeea"/>
<polygon points="251,365.7 318,365.7 318,372 300,376 251,376" fill="#5a3018"/>
<!-- ottoman -->
<path d="M343 364 Q380 352 408 356.5 Q413 362 404 372 L398 366 L345 368 Z" fill="#ece8e2"/>
<polygon points="334.8,365.7 393,365.7 397,374 337.6,376" fill="#7a4420"/>
<path d="M376 376 V384 M352.4 386 L376 384 L400.7 391 M376 384 L360 396" stroke="#8a847c" stroke-width="1.5" fill="none"/>
<polygon points="337.6,398 362,391.7 374.7,395 352,404.7" fill="#4a4038" filter="url(#bl05)"/>
<!-- chair base -->
<path d="M305 376 L289 402 M300 386 L327 392 M296 394 L270 402" stroke="#a09a92" stroke-width="1.6" fill="none"/>
<!-- wood table -->
<polygon points="199,371 262,371 300,372 300,383 262,384 199,385" fill="#3e1e0e"/>
<polygon points="250,371 300,372 318,372 318,378 252,377" fill="#5e3219"/>
<rect x="207.4" y="380.5" width="6.6" height="58" fill="#55260f"/>
<polygon points="265,373 271.5,373 275,411.7 269,411.7" fill="#5a2812"/>
<rect x="224" y="383" width="5" height="29.5" fill="#4a2210"/>
<!-- ========== red cushion & chair ========== -->
<polygon points="621.6,384.5 645,372.8 690.3,380.6 676.3,394" fill="#9a2418"/>
<polygon points="621.6,384.5 676.3,394 676,396.5 621.6,387" fill="#5a100c"/>
<polygon points="702.8,347 716,341.6 706,377.5 688.8,393 692,379" fill="#6a1c14"/>
<polygon points="700,366 705,364 703.5,372 698.5,374" fill="#e0d8cc"/>
<path d="M701.3 385.3 L710.6 407 M697 388 L706 409 M690 393 L684 404" stroke="#b89060" stroke-width="1.2" fill="none"/>
<!-- ========== lamps ========== -->
<path d="M334.2 143 V200" stroke="#2a2018" stroke-width="0.6"/>
<path d="M318 212 Q318.5 200.5 327 200 H339 Q347.5 200.5 348 212 V226 Q347 238.5 338 239 H328 Q319 238.5 318 226 Z" fill="url(#glamp)"/>
<g stroke="#6a5238" stroke-width="0.5" fill="none" opacity="0.8"><path d="M318.5 213 H347.5 M318 219.5 H348 M318.5 226 H347.5 M320.5 232.5 H345.5 M320.5 206.5 H345.5 M326 200.5 V238.5 M333 200 V239 M340 200.5 V238.5"/></g>
<ellipse cx="333" cy="237.8" rx="5" ry="1.5" fill="#f4f0e8"/>
<path d="M566.5 143 V243" stroke="#d8d4cc" stroke-width="0.7" opacity="0.8"/>
<path d="M537.3 246.5 Q536.6 226 540 219.5 Q544 213.2 550.7 213.2 Q557.5 213.2 561.5 219.5 Q565 226 564.3 246.5 Q550.7 251.5 537.3 246.5 Z" fill="#c4a880"/>
<g stroke="#7a5e3c" stroke-width="0.4" opacity="0.7"><path d="M543 216 V248 M547 214 V248.5 M551 213.5 V249 M555 214 V248.5 M559 217 V248"/></g>
<circle cx="566.8" cy="252.5" r="10.8" fill="#f6f4f0"/>
<circle cx="566.8" cy="252.5" r="12.6" fill="#fff" opacity="0.25" filter="url(#bl1)"/>

</g>

<g stroke="#e8e4dc" stroke-width="0.6" opacity="0.75"><path d="M401.5 142 V483.2 M604.5 142 V483.2 M199 256.2 H807 M199 369.9 H807"/></g>
<g stroke="#f2ece6" stroke-width="3" fill="none" stroke-linejoin="miter">
<path d="M263 160 H217.5 V205"/><path d="M743.6 160.5 H788.8 V205"/><path d="M217.5 420.7 V465.3 H262.5"/><path d="M788.8 420 V464.8 H766.7"/>
</g>

</svg>
<svg class="b" style="left:199px;top:120px" width="608" height="385" viewBox="199 120 608 385" font-family="Liberation Sans, sans-serif">
<defs>
<linearGradient id="gtl" x1="0" y1="0" x2="1" y2="0">
 <stop offset="0" stop-color="#0c0c0c"/><stop offset="0.1" stop-color="#262626"/><stop offset="0.3" stop-color="#767676"/><stop offset="0.5" stop-color="#8c8c8c"/><stop offset="0.7" stop-color="#767676"/><stop offset="0.9" stop-color="#262626"/><stop offset="1" stop-color="#0c0c0c"/></linearGradient>
<linearGradient id="gor" x1="0" y1="0" x2="1" y2="0">
 <stop offset="0" stop-color="#dc981e" stop-opacity="0"/><stop offset="0.18" stop-color="#dc981e" stop-opacity="0.75"/><stop offset="0.5" stop-color="#e6a026"/><stop offset="0.82" stop-color="#dc981e" stop-opacity="0.75"/><stop offset="1" stop-color="#dc981e" stop-opacity="0"/></linearGradient>
</defs>
<polygon points="533.5,408 545,393.3 696,393.3 696,408" fill="#d6d8da" opacity="0.9"/>
<text x="547.80" y="404.90" font-size="10" font-weight="bold" fill="#262626" text-anchor="start" textLength="52.70" lengthAdjust="spacingAndGlyphs" >Keyframe Editor</text>
<rect x="598.9" y="394.3" width="28.4" height="12.6" rx="4" fill="#dfe0e4" stroke="#0b18e0" stroke-width="2.4"/>
<text x="604.20" y="404.90" font-size="10" font-weight="bold" fill="#262626" text-anchor="start" textLength="18.00" lengthAdjust="spacingAndGlyphs" >(5/6)</text>
<path d="M648.2 398.6 v4.8 l-3.2 -2.4 z M656 398.6 v4.8 l3.2 -2.4 z" fill="#333"/>
<rect x="672.8" y="397.4" width="7.8" height="7.8" fill="#eee" stroke="#333" stroke-width="0.8"/><path d="M676.7 398.8 v3.6 M675.3 401 l1.4 1.6 l1.4 -1.6 M674.6 403.9 h4.2" stroke="#333" stroke-width="0.6" fill="none"/>
<rect x="684" y="397.4" width="7.8" height="7.8" fill="#eee" stroke="#333" stroke-width="0.8"/><path d="M687.9 399 v0.9 M687.9 400.8 v3" stroke="#333" stroke-width="0.9"/>
<rect x="310.6" y="407.8" width="385.6" height="97" fill="#3e3e3e"/>
<rect x="310.6" y="407.8" width="385.6" height="0.7" fill="#6a6a6a"/>
<rect x="310.4" y="407.8" width="0.8" height="97" fill="#777"/>
<rect x="695.6" y="407.8" width="0.8" height="97" fill="#b0b0b0"/>
<rect x="321.7" y="414.5" width="26.7" height="11" rx="5.5" fill="#8c8c8c" stroke="#a0a0a0" stroke-width="0.5"/><circle cx="327.5" cy="420.0" r="4.4" fill="#2c2c2c"/>
<text x="352.40" y="423.94" font-size="10.4" font-weight="normal" fill="#f0f0f0" text-anchor="start" textLength="34.60" lengthAdjust="spacingAndGlyphs" >Time of Day</text>
<path d="M322.7,431.2 L393,431.2 L401.9,422.3 L496.6,422.3 Q497.6,422.3 497.6,423.3 L497.6,455.4 Q497.6,456.4 496.6,456.4 L322.7,456.4 Q321.7,456.4 321.7,455.4 L321.7,432.2 Q321.7,431.2 322.7,431.2 Z" fill="#6a6a6a" stroke="#8e8e8e" stroke-width="0.6"/>
<rect x="328" y="435.7" width="163" height="15.5" fill="url(#gtl)"/><rect x="328" y="449.5" width="163" height="1.5" fill="url(#gor)" opacity="0.92"/><rect x="328" y="435.7" width="163" height="0.6" fill="url(#gor)" opacity="0.3"/><rect x="349.20" y="436.30" width="0.8" height="1.8" fill="#fff" opacity="0.35"/><rect x="349.20" y="448.60" width="0.8" height="1.8" fill="#fff" opacity="0.35"/><text x="341.90" y="446.20" font-size="8.2" font-weight="normal" fill="#f4f4f4" text-anchor="start" textLength="15.40" lengthAdjust="spacingAndGlyphs" fill-opacity="0.35" >15:00</text><rect x="367.90" y="436.30" width="0.8" height="1.8" fill="#fff" opacity="0.75"/><rect x="367.90" y="448.60" width="0.8" height="1.8" fill="#fff" opacity="0.75"/><text x="360.60" y="446.20" font-size="8.2" font-weight="normal" fill="#f4f4f4" text-anchor="start" textLength="15.40" lengthAdjust="spacingAndGlyphs" fill-opacity="0.75" >16:00</text><rect x="386.60" y="436.30" width="0.8" height="1.8" fill="#fff" opacity="0.95"/><rect x="386.60" y="448.60" width="0.8" height="1.8" fill="#fff" opacity="0.95"/><text x="379.30" y="446.20" font-size="8.2" font-weight="normal" fill="#f4f4f4" text-anchor="start" textLength="15.40" lengthAdjust="spacingAndGlyphs" fill-opacity="0.95" >17:00</text><rect x="405.30" y="436.30" width="0.8" height="1.8" fill="#fff" opacity="1"/><rect x="405.30" y="448.60" width="0.8" height="1.8" fill="#fff" opacity="1"/><text x="398.00" y="446.20" font-size="8.2" font-weight="normal" fill="#f4f4f4" text-anchor="start" textLength="15.40" lengthAdjust="spacingAndGlyphs" >18:00</text><rect x="424.00" y="436.30" width="0.8" height="1.8" fill="#fff" opacity="0.95"/><rect x="424.00" y="448.60" width="0.8" height="1.8" fill="#fff" opacity="0.95"/><text x="416.70" y="446.20" font-size="8.2" font-weight="normal" fill="#f4f4f4" text-anchor="start" textLength="15.40" lengthAdjust="spacingAndGlyphs" fill-opacity="0.95" >19:00</text><rect x="442.70" y="436.30" width="0.8" height="1.8" fill="#fff" opacity="0.9"/><rect x="442.70" y="448.60" width="0.8" height="1.8" fill="#fff" opacity="0.9"/><text x="435.40" y="446.20" font-size="8.2" font-weight="normal" fill="#f4f4f4" text-anchor="start" textLength="15.40" lengthAdjust="spacingAndGlyphs" fill-opacity="0.9" >20:00</text><rect x="461.40" y="436.30" width="0.8" height="1.8" fill="#fff" opacity="0.4"/><rect x="461.40" y="448.60" width="0.8" height="1.8" fill="#fff" opacity="0.4"/><text x="454.10" y="446.20" font-size="8.2" font-weight="normal" fill="#f4f4f4" text-anchor="start" textLength="15.40" lengthAdjust="spacingAndGlyphs" fill-opacity="0.4" >21:00</text><rect x="480.10" y="436.30" width="0.8" height="1.8" fill="#fff" opacity="0.15"/><rect x="480.10" y="448.60" width="0.8" height="1.8" fill="#fff" opacity="0.15"/><text x="472.80" y="446.20" font-size="8.2" font-weight="normal" fill="#f4f4f4" text-anchor="start" textLength="15.40" lengthAdjust="spacingAndGlyphs" fill-opacity="0.15" >22:00</text><path d="M409.2,435.7 h3.2 l-1.6,2.4 z" fill="#a82018"/><circle cx="410.8" cy="449.8" r="1.4" fill="#7a1810"/>
<text x="330.50" y="445.93" font-size="7.3" font-weight="normal" fill="#f4f4f4" text-anchor="start" fill-opacity="0.2" >0</text>
<rect x="316" y="459.2" width="185" height="42.6" rx="4" fill="none" stroke="#0b18e0" stroke-width="2.9"/>
<rect x="321.7" y="463.3" width="26.7" height="11" rx="5.5" fill="#e6e6e6"/><circle cx="342.59999999999997" cy="468.8" r="4.4" fill="#333"/>
<text x="352.40" y="472.64" font-size="10.4" font-weight="normal" fill="#f0f0f0" text-anchor="start" textLength="37.20" lengthAdjust="spacingAndGlyphs" >Field of View</text>
<path d="M322.7,480.2 L393,480.2 L402.9,471.3 L496.6,471.3 Q497.6,471.3 497.6,472.3 L497.6,498.6 Q497.6,499.6 496.6,499.6 L322.7,499.6 Q321.7,499.6 321.7,498.6 L321.7,481.2 Q321.7,480.2 322.7,480.2 Z" fill="#6a6a6a" stroke="#8e8e8e" stroke-width="0.6"/>
<rect x="328" y="489" width="122" height="1.2" fill="#d4d4d4"/>
<rect x="410" y="484" width="3.2" height="11" rx="0.6" fill="#dcdcdc" stroke="#4a4a4a" stroke-width="0.5"/>
<text x="458.00" y="492.25" font-size="8.2" font-weight="normal" fill="#f0f0f0" text-anchor="start" textLength="15.50" lengthAdjust="spacingAndGlyphs" >99.5°</text>
<rect x="502.8" y="410" width="190.4" height="50.2" rx="4" fill="none" stroke="#0b18e0" stroke-width="2.9"/>
<rect x="508.4" y="414.5" width="26.7" height="11" rx="5.5" fill="#e6e6e6"/><circle cx="529.3000000000001" cy="420.0" r="4.4" fill="#333"/>
<text x="539.00" y="423.94" font-size="10.4" font-weight="normal" fill="#f0f0f0" text-anchor="start" textLength="32.00" lengthAdjust="spacingAndGlyphs" >Timestamp</text>
<path d="M509,431.2 L577.4,431.2 L586.3,422.3 L683.3,422.3 Q684.3,422.3 684.3,423.3 L684.3,455.4 Q684.3,456.4 683.3,456.4 L509,456.4 Q508,456.4 508,455.4 L508,432.2 Q508,431.2 509,431.2 Z" fill="#6a6a6a" stroke="#8e8e8e" stroke-width="0.6"/>
<rect x="515" y="435.7" width="163" height="15.5" fill="url(#gtl)"/><rect x="515" y="435.7" width="163" height="15.5" fill="#141414" opacity="0.85"/><rect x="553.3" y="435.7" width="83.60000000000002" height="15.5" fill="#8e8e8e"/><rect x="515" y="449.5" width="163" height="1.5" fill="url(#gor)" opacity="0.92"/><rect x="515" y="435.7" width="163" height="0.6" fill="url(#gor)" opacity="0.3"/><rect x="534.30" y="436.30" width="0.8" height="1.8" fill="#fff" opacity="0.2"/><rect x="534.30" y="448.60" width="0.8" height="1.8" fill="#fff" opacity="0.2"/><text x="527.00" y="446.20" font-size="8.2" font-weight="normal" fill="#f4f4f4" text-anchor="start" textLength="15.40" lengthAdjust="spacingAndGlyphs" fill-opacity="0.2" >00:07</text><rect x="553.00" y="436.30" width="0.8" height="1.8" fill="#fff" opacity="0.9"/><rect x="553.00" y="448.60" width="0.8" height="1.8" fill="#fff" opacity="0.9"/><text x="545.70" y="446.20" font-size="8.2" font-weight="normal" fill="#f4f4f4" text-anchor="start" textLength="15.40" lengthAdjust="spacingAndGlyphs" fill-opacity="0.9" >00:08</text><rect x="571.70" y="436.30" width="0.8" height="1.8" fill="#fff" opacity="1"/><rect x="571.70" y="448.60" width="0.8" height="1.8" fill="#fff" opacity="1"/><text x="564.40" y="446.20" font-size="8.2" font-weight="normal" fill="#f4f4f4" text-anchor="start" textLength="15.40" lengthAdjust="spacingAndGlyphs" >00:09</text><rect x="590.40" y="436.30" width="0.8" height="1.8" fill="#fff" opacity="1"/><rect x="590.40" y="448.60" width="0.8" height="1.8" fill="#fff" opacity="1"/><text x="583.10" y="446.20" font-size="8.2" font-weight="normal" fill="#f4f4f4" text-anchor="start" textLength="15.40" lengthAdjust="spacingAndGlyphs" >00:10</text><rect x="609.10" y="436.30" width="0.8" height="1.8" fill="#fff" opacity="1"/><rect x="609.10" y="448.60" width="0.8" height="1.8" fill="#fff" opacity="1"/><text x="601.80" y="446.20" font-size="8.2" font-weight="normal" fill="#f4f4f4" text-anchor="start" textLength="15.40" lengthAdjust="spacingAndGlyphs" >00:11</text><rect x="627.80" y="436.30" width="0.8" height="1.8" fill="#fff" opacity="1"/><rect x="627.80" y="448.60" width="0.8" height="1.8" fill="#fff" opacity="1"/><text x="620.50" y="446.20" font-size="8.2" font-weight="normal" fill="#f4f4f4" text-anchor="start" textLength="15.40" lengthAdjust="spacingAndGlyphs" >00:12</text><rect x="646.50" y="436.30" width="0.8" height="1.8" fill="#fff" opacity="0.22"/><rect x="646.50" y="448.60" width="0.8" height="1.8" fill="#fff" opacity="0.22"/><text x="639.20" y="446.20" font-size="8.2" font-weight="normal" fill="#f4f4f4" text-anchor="start" textLength="15.40" lengthAdjust="spacingAndGlyphs" fill-opacity="0.22" >00:13</text><rect x="665.20" y="436.30" width="0.8" height="1.8" fill="#fff" opacity="0.1"/><rect x="665.20" y="448.60" width="0.8" height="1.8" fill="#fff" opacity="0.1"/><text x="657.90" y="446.20" font-size="8.2" font-weight="normal" fill="#f4f4f4" text-anchor="start" textLength="15.40" lengthAdjust="spacingAndGlyphs" fill-opacity="0.1" >00:14</text><path d="M595.4,435.7 h3.2 l-1.6,2.4 z" fill="#a82018"/><circle cx="597" cy="449.8" r="1.4" fill="#7a1810"/>
<rect x="508.4" y="463.3" width="26.7" height="11" rx="5.5" fill="#6c6c6c"/><circle cx="514.4" cy="468.8" r="4.3" fill="#7a7a7a"/>
<text x="539.00" y="472.64" font-size="10.4" font-weight="normal" fill="#686868" text-anchor="start" textLength="78.50" lengthAdjust="spacingAndGlyphs" >Depth of Field - Focal Point</text>
<path d="M509,480.2 L623,480.2 L632,471.3 L683.3,471.3 Q684.3,471.3 684.3,472.3 L684.3,498.6 Q684.3,499.6 683.3,499.6 L509,499.6 Q508,499.6 508,498.6 L508,481.2 Q508,480.2 509,480.2 Z" fill="#6a6a6a" stroke="#8e8e8e" stroke-width="0.6"/>
<text x="511.70" y="491.85" font-size="8.2" font-weight="normal" fill="#ececec" text-anchor="start" textLength="77.30" lengthAdjust="spacingAndGlyphs" >Auto Focus Enabled in Settings</text>
<rect x="703.4" y="409" width="63.4" height="16.6" rx="2.2" fill="#393939" stroke="#a8a8a8" stroke-width="0.7"/><text x="724.60" y="420.90" font-size="10" font-weight="bold" fill="#ffffff" text-anchor="start" textLength="21.00" lengthAdjust="spacingAndGlyphs" >Insert</text>
<rect x="702.7" y="437.9" width="64.4" height="19.6" rx="3.5" fill="#707070" stroke="#0b18e0" stroke-width="2.9"/>
<text x="726.50" y="451.40" font-size="10" font-weight="bold" fill="#9a9a9a" text-anchor="start" textLength="18.00" lengthAdjust="spacingAndGlyphs" >Apply</text>
<rect x="703.4" y="460.8" width="63.4" height="17.2" rx="2.2" fill="#393939" stroke="#a8a8a8" stroke-width="0.7"/><text x="723.80" y="473.00" font-size="10" font-weight="bold" fill="#ffffff" text-anchor="start" textLength="22.60" lengthAdjust="spacingAndGlyphs" >Delete</text>
<rect x="703.4" y="481.8" width="63.4" height="17.8" rx="2.2" fill="#393939" stroke="#a8a8a8" stroke-width="0.7"/><text x="726.80" y="494.30" font-size="10" font-weight="bold" fill="#ffffff" text-anchor="start" textLength="16.60" lengthAdjust="spacingAndGlyphs" >Back</text>
</svg>
<div class="b" style="left:0.00px;top:533.50px;width:1024.00px;height:6.00px;background:#c8c8c8;"></div>
<div class="b" style="left:491.00px;top:535.30px;width:108.00px;height:5.00px;background:#ffffff;"></div>
<div class="b" style="left:659.00px;top:535.30px;width:108.00px;height:5.00px;background:#ffffff;"></div>
<span class="t" style="top:537.94px;font-size:6.7px;line-height:8.71px;color:#333;left:2.00px;transform:scaleX(1.6826);transform-origin:0 50%;">Click to select, TAB for alternates, CTRL adds, SHIFT unselects.</span>
<svg class="b" style="left:0;top:534.5px" width="1024" height="6" viewBox="0 533 1024 6">
<rect x="479" y="536.5" width="4" height="3" fill="#f4f4f4" stroke="#3a8a3a" stroke-width="0.8"/>
<rect x="632" y="535.8" width="8" height="4" fill="#eee" stroke="#334" stroke-width="0.9"/><rect x="648" y="536" width="6" height="4" fill="#888"/>
<rect x="888" y="536.8" width="8" height="3" fill="#f0c040"/><path d="M902 536 l5 4 M907 536 l-5 4" stroke="#c03030" stroke-width="1"/><rect x="914" y="536.5" width="5" height="3" fill="#e09050"/>
<path d="M932 536 l5 4 M937 536 l-5 4" stroke="#c03030" stroke-width="1"/><rect x="927" y="536.8" width="5" height="3" fill="#5a8ac8"/><path d="M946.5 535.5 v4" stroke="#333" stroke-width="1"/><circle cx="960" cy="538.6" r="2.2" fill="#aaa"/><rect x="969" y="536.2" width="7" height="4" fill="#f4f4f4" stroke="#555" stroke-width="0.6"/>
</svg>
</div></body></html>
